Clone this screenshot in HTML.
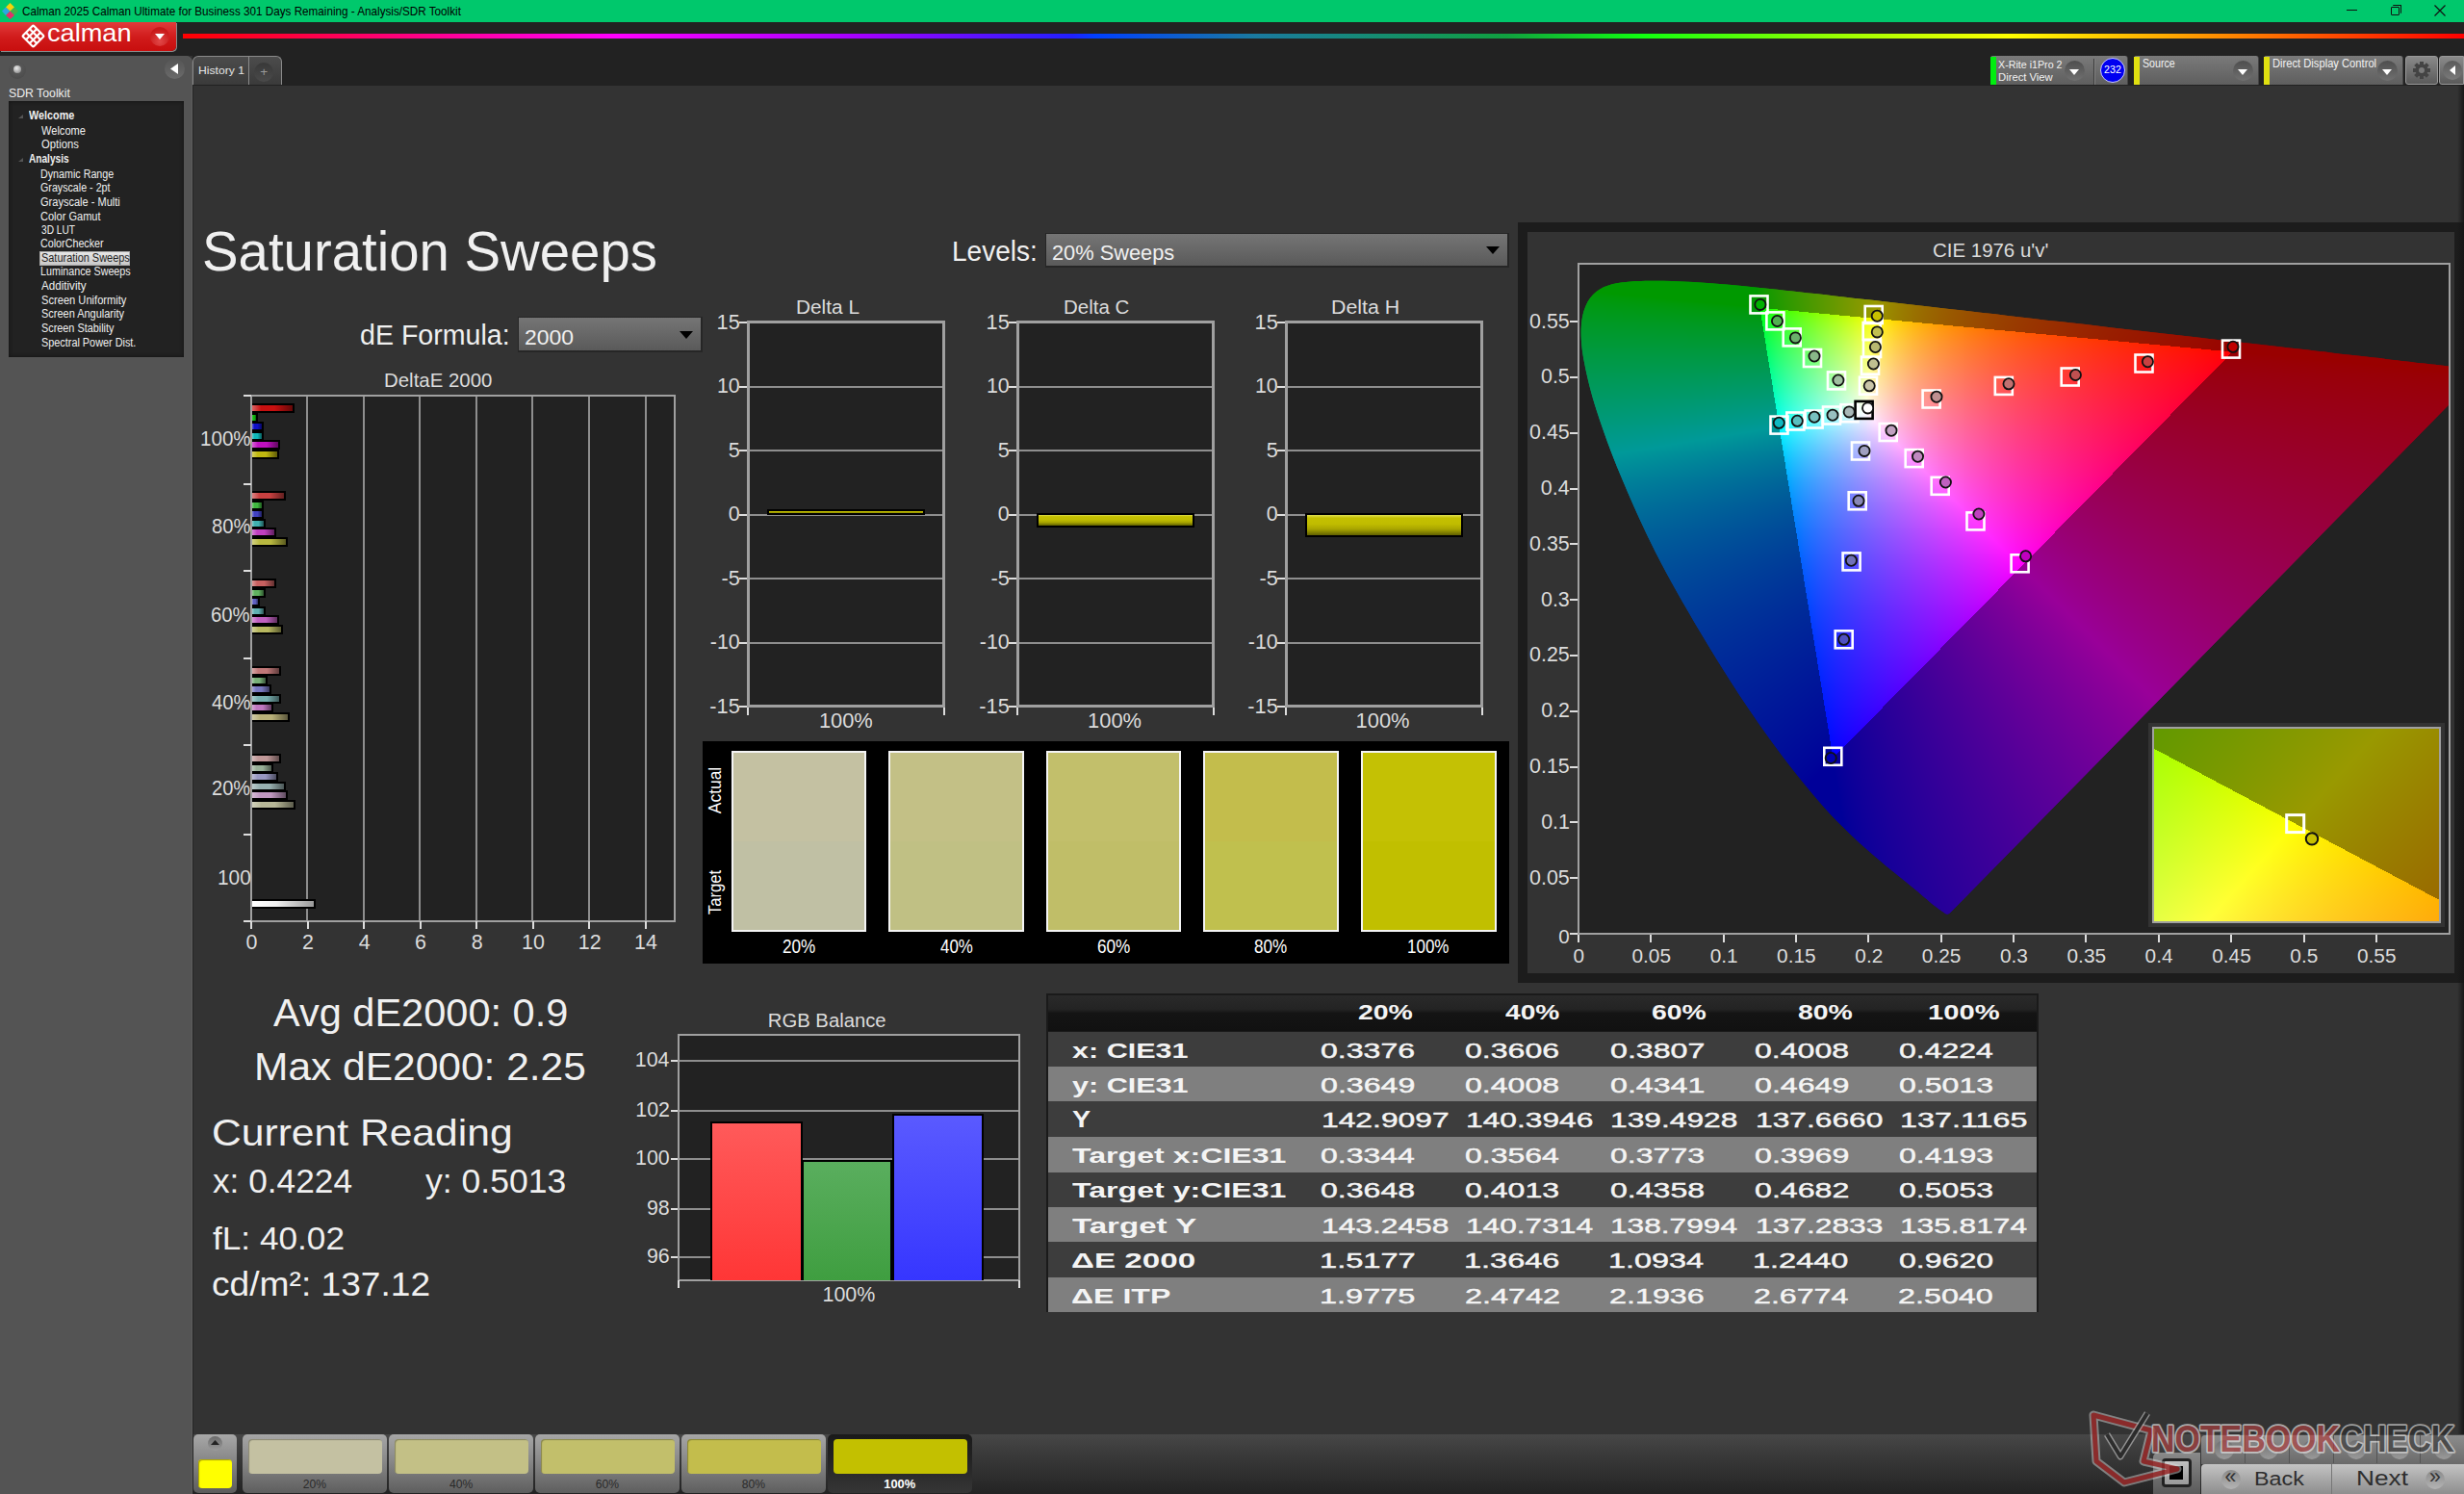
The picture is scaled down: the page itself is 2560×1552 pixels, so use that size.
<!DOCTYPE html><html><head><meta charset="utf-8"><style>html,body{margin:0;padding:0;width:2560px;height:1552px;overflow:hidden;background:#333;}body{position:relative;font-family:"Liberation Sans",sans-serif;}div,svg,canvas{box-sizing:border-box;}</style></head><body><div style="position:absolute;left:0px;top:0px;width:2560px;height:1552px;background:#333"></div>
<div style="position:absolute;left:0px;top:0px;width:2560px;height:23px;background:#00c86c"></div>
<div style="position:absolute;left:0px;top:23px;width:2560px;height:35px;background:#222"></div>
<div style="position:absolute;left:200px;top:58px;width:2360px;height:31px;background:#222"></div>
<div style="position:absolute;left:0;top:58px;width:200px;height:1494px;background:#545454;border-top-right-radius:7px;box-shadow:inset -1px 0 0 #5c5c5c"></div>
<div style="position:absolute;left:200px;top:66px;width:1px;height:1486px;background:#262626"></div>
<svg style="position:absolute;left:2px;top:3px" width="17" height="17" viewBox="0 0 17 17">
<polygon points="8.5,0 13,4.5 8.5,9 4,4.5" fill="#f5d20a"/>
<polygon points="13,4.5 17,8.5 13,13 8.5,8.5" fill="#3cb44a"/>
<polygon points="4,4.5 8.5,8.5 4,13 0,8.5" fill="#2aa8e0"/>
<polygon points="8.5,8.5 13,13 8.5,17 4,13" fill="#e0306a"/></svg>
<div style="position:absolute;left:23.42px;top:5.82px;font-size:12.33px;line-height:1;font-weight:normal;color:#000;white-space:nowrap;transform:scaleX(0.9482);transform-origin:0 0;">Calman 2025 Calman Ultimate for Business 301 Days Remaining  - Analysis/SDR Toolkit</div>
<div style="position:absolute;left:2438px;top:10px;width:11px;height:1px;background:#111"></div>
<div style="position:absolute;left:2484px;top:7px;width:9px;height:9px;border:1px solid #111;border-radius:1px"></div>
<div style="position:absolute;left:2486px;top:5px;width:9px;height:9px;border-top:1px solid #111;border-right:1px solid #111;border-radius:1px"></div>
<svg style="position:absolute;left:2529px;top:5px" width="12" height="12"><path d="M0.5 0.5L11.5 11.5M11.5 0.5L0.5 11.5" stroke="#111" stroke-width="1.2"/></svg>
<div style="position:absolute;left:0;top:23px;width:183px;height:30px;background:linear-gradient(#e23b3b,#d01a1a 55%,#c80e0e);border-bottom-right-radius:5px;box-shadow:1px 1px 0 #8a8a8a;"></div>
<svg style="position:absolute;left:22px;top:25px" width="25" height="25" viewBox="-12.5 -12.5 25 25">
<g fill="none" stroke="#fff" stroke-width="2.2" stroke-linejoin="round" transform="rotate(45)">
<rect x="-8" y="-8" width="16" height="16" rx="1.5"/>
<line x1="-2.7" y1="-8" x2="-2.7" y2="8"/><line x1="2.7" y1="-8" x2="2.7" y2="8"/>
<line x1="-8" y1="-2.7" x2="8" y2="-2.7"/><line x1="-8" y1="2.7" x2="8" y2="2.7"/></g></svg>
<div style="position:absolute;left:48.91px;top:22.46px;font-size:25.34px;line-height:1;font-weight:normal;color:#fff;white-space:nowrap;transform:scaleX(1.0724);transform-origin:0 0;">calman</div>
<div style="position:absolute;left:156px;top:28px;width:20px;height:20px;border-radius:50%;background:radial-gradient(circle at 50% 75%,#e24848,#c81818 70%)"></div>
<svg style="position:absolute;left:161px;top:35px" width="10" height="6"><polygon points="0,0 10,0 5,6" fill="#fff"/></svg>
<div style="position:absolute;left:190px;top:35px;width:2370px;height:5px;background:linear-gradient(90deg,#ff0000 0%,#ff0090 11%,#ff00ff 19%,#a000ff 30%,#2020ff 39%,#0040ff 40%,#1a7aa0 47%,#10a040 58%,#10ff10 64%,#a0ff00 73%,#ffff00 80%,#ff9000 89%,#ff0000 100%)"></div>
<div style="position:absolute;left:9px;top:64px;width:18px;height:18px;border-radius:50%;background:radial-gradient(circle at 50% 40%,#5e5e5e,#4c4c4c 75%,#5a5a5a)"></div>
<div style="position:absolute;left:14px;top:68px;width:8px;height:8px;border-radius:50%;background:radial-gradient(circle at 40% 35%,#eee,#999 70%)"></div>
<div style="position:absolute;left:171px;top:61px;width:21px;height:21px;border-radius:50%;background:linear-gradient(#555,#6a6a6a)"></div>
<svg style="position:absolute;left:177px;top:66px" width="8" height="11"><polygon points="8,0 8,11 0,5.5" fill="#fff"/></svg>
<div style="position:absolute;left:8.51px;top:90.44px;font-size:13.01px;line-height:1;font-weight:normal;color:#eee;white-space:nowrap;transform:scaleX(0.9442);transform-origin:0 0;">SDR Toolkit</div>
<div style="position:absolute;left:9px;top:105px;width:182px;height:266px;background:#222;box-shadow:inset 0 0 4px #111"></div>
<div style="position:absolute;left:41px;top:261px;width:94px;height:15px;background:linear-gradient(#e8e8e8,#c8c8c8);border:1px solid #aaa"></div>
<div style="position:absolute;left:30.00px;top:113.65px;font-size:12.88px;line-height:1;font-weight:bold;color:#f0f0f0;white-space:nowrap;transform:scaleX(0.8399);transform-origin:0 0;">Welcome</div>
<svg style="position:absolute;left:19px;top:119px" width="5" height="4"><polygon points="5,0 5,4 0,4" fill="#555"/></svg>
<div style="position:absolute;left:43.00px;top:129.65px;font-size:12.88px;line-height:1;font-weight:normal;color:#f0f0f0;white-space:nowrap;transform:scaleX(0.8591);transform-origin:0 0;">Welcome</div>
<div style="position:absolute;left:42.55px;top:143.65px;font-size:12.88px;line-height:1;font-weight:normal;color:#f0f0f0;white-space:nowrap;transform:scaleX(0.8741);transform-origin:0 0;">Options</div>
<div style="position:absolute;left:29.80px;top:158.65px;font-size:12.88px;line-height:1;font-weight:bold;color:#f0f0f0;white-space:nowrap;transform:scaleX(0.7848);transform-origin:0 0;">Analysis</div>
<svg style="position:absolute;left:19px;top:164px" width="5" height="4"><polygon points="5,0 5,4 0,4" fill="#555"/></svg>
<div style="position:absolute;left:42.14px;top:174.65px;font-size:12.88px;line-height:1;font-weight:normal;color:#f0f0f0;white-space:nowrap;transform:scaleX(0.8323);transform-origin:0 0;">Dynamic Range</div>
<div style="position:absolute;left:42.47px;top:188.65px;font-size:12.88px;line-height:1;font-weight:normal;color:#f0f0f0;white-space:nowrap;transform:scaleX(0.8305);transform-origin:0 0;">Grayscale - 2pt</div>
<div style="position:absolute;left:42.45px;top:203.65px;font-size:12.88px;line-height:1;font-weight:normal;color:#f0f0f0;white-space:nowrap;transform:scaleX(0.8565);transform-origin:0 0;">Grayscale - Multi</div>
<div style="position:absolute;left:42.45px;top:218.65px;font-size:12.88px;line-height:1;font-weight:normal;color:#f0f0f0;white-space:nowrap;transform:scaleX(0.8566);transform-origin:0 0;">Color Gamut</div>
<div style="position:absolute;left:42.70px;top:232.19px;font-size:13.43px;line-height:1;font-weight:normal;color:#f0f0f0;white-space:nowrap;transform:scaleX(0.7569);transform-origin:0 0;">3D LUT</div>
<div style="position:absolute;left:42.46px;top:247.45px;font-size:12.88px;line-height:1;font-weight:normal;color:#f0f0f0;white-space:nowrap;transform:scaleX(0.8343);transform-origin:0 0;">ColorChecker</div>
<div style="position:absolute;left:42.56px;top:262.45px;font-size:12.88px;line-height:1;font-weight:normal;color:#222;white-space:nowrap;transform:scaleX(0.8490);transform-origin:0 0;">Saturation Sweeps</div>
<div style="position:absolute;left:42.14px;top:276.35px;font-size:12.88px;line-height:1;font-weight:normal;color:#f0f0f0;white-space:nowrap;transform:scaleX(0.8336);transform-origin:0 0;">Luminance Sweeps</div>
<div style="position:absolute;left:43.00px;top:291.35px;font-size:12.88px;line-height:1;font-weight:normal;color:#f0f0f0;white-space:nowrap;transform:scaleX(0.9025);transform-origin:0 0;">Additivity</div>
<div style="position:absolute;left:42.55px;top:306.35px;font-size:12.88px;line-height:1;font-weight:normal;color:#f0f0f0;white-space:nowrap;transform:scaleX(0.8643);transform-origin:0 0;">Screen Uniformity</div>
<div style="position:absolute;left:42.56px;top:320.25px;font-size:12.88px;line-height:1;font-weight:normal;color:#f0f0f0;white-space:nowrap;transform:scaleX(0.8515);transform-origin:0 0;">Screen Angularity</div>
<div style="position:absolute;left:42.57px;top:335.25px;font-size:12.88px;line-height:1;font-weight:normal;color:#f0f0f0;white-space:nowrap;transform:scaleX(0.8432);transform-origin:0 0;">Screen Stability</div>
<div style="position:absolute;left:42.57px;top:350.25px;font-size:12.88px;line-height:1;font-weight:normal;color:#f0f0f0;white-space:nowrap;transform:scaleX(0.8435);transform-origin:0 0;">Spectral Power Dist.</div>
<div style="position:absolute;left:200px;top:58px;width:93px;height:30px;background:linear-gradient(#4c4c4c,#3a3a3a);border-top-left-radius:6px;border-top-right-radius:6px;border:1px solid #8a8a8a;border-bottom:none"></div>
<div style="position:absolute;left:258px;top:59px;width:1px;height:29px;background:#8a8a8a"></div>
<div style="position:absolute;left:205.53px;top:68.42px;font-size:11.51px;line-height:1;font-weight:normal;color:#e4e4e4;white-space:nowrap;transform:scaleX(1.0581);transform-origin:0 0;">History 1</div>
<div style="position:absolute;left:264px;top:65px;width:20px;height:20px;border-radius:50%;background:linear-gradient(#383838,#4a4a4a)"></div>
<div style="position:absolute;left:270.27px;top:67.97px;font-size:13.56px;line-height:1;font-weight:normal;color:#999;white-space:nowrap;">+</div>
<div style="position:absolute;left:2068px;top:58px;width:143px;height:30px;background:linear-gradient(#7a7a7a,#5e5e5e);border-top-left-radius:3px;border-top-right-radius:3px;border-left:1px solid #888;border-right:1px solid #444"></div>
<div style="position:absolute;left:2068px;top:59px;width:6px;height:29px;background:#00ee10"></div>
<div style="position:absolute;left:2145px;top:63px;width:21px;height:21px;border-radius:50%;background:linear-gradient(#4e4e4e,#707070)"></div>
<svg style="position:absolute;left:2150px;top:72px" width="10" height="6"><polygon points="0,0 10,0 5,6" fill="#fff"/></svg>
<div style="position:absolute;left:2076.39px;top:60.60px;font-size:11.64px;line-height:1;font-weight:normal;color:#f2f2f2;white-space:nowrap;transform:scaleX(0.9190);transform-origin:0 0;">X-Rite i1Pro 2</div>
<div style="position:absolute;left:2076.10px;top:74.64px;font-size:11.37px;line-height:1;font-weight:normal;color:#f2f2f2;white-space:nowrap;transform:scaleX(0.9917);transform-origin:0 0;">Direct View</div>
<div style="position:absolute;left:2175px;top:61px;width:1px;height:27px;background:#3e3e3e"></div>
<div style="position:absolute;left:2176px;top:61px;width:1px;height:27px;background:#808080"></div>
<div style="position:absolute;left:2182px;top:60px;width:26px;height:26px;border-radius:50%;background:#0000f0;border:1.5px solid #c8c8ff"></div>
<div style="position:absolute;left:2186.04px;top:67.39px;font-size:10.71px;line-height:1;font-weight:normal;color:#fff;white-space:nowrap;">232</div>
<div style="position:absolute;left:2217px;top:58px;width:130px;height:30px;background:linear-gradient(#7a7a7a,#5e5e5e);border-top-left-radius:3px;border-top-right-radius:3px;border-left:1px solid #888;border-right:1px solid #444"></div>
<div style="position:absolute;left:2217px;top:59px;width:6px;height:29px;background:#e0e010"></div>
<div style="position:absolute;left:2320px;top:63px;width:21px;height:21px;border-radius:50%;background:linear-gradient(#4e4e4e,#707070)"></div>
<svg style="position:absolute;left:2325px;top:72px" width="10" height="6"><polygon points="0,0 10,0 5,6" fill="#fff"/></svg>
<div style="position:absolute;left:2225.57px;top:59.73px;font-size:12.68px;line-height:1;font-weight:normal;color:#f2f2f2;white-space:nowrap;transform:scaleX(0.8419);transform-origin:0 0;">Source</div>
<div style="position:absolute;left:2352px;top:58px;width:145px;height:30px;background:linear-gradient(#7a7a7a,#5e5e5e);border-top-left-radius:3px;border-top-right-radius:3px;border-left:1px solid #888;border-right:1px solid #444"></div>
<div style="position:absolute;left:2352px;top:59px;width:6px;height:29px;background:#e0e010"></div>
<div style="position:absolute;left:2470px;top:63px;width:21px;height:21px;border-radius:50%;background:linear-gradient(#4e4e4e,#707070)"></div>
<svg style="position:absolute;left:2475px;top:72px" width="10" height="6"><polygon points="0,0 10,0 5,6" fill="#fff"/></svg>
<div style="position:absolute;left:2361.11px;top:60.02px;font-size:12.33px;line-height:1;font-weight:normal;color:#f2f2f2;white-space:nowrap;transform:scaleX(0.9067);transform-origin:0 0;">Direct Display Control</div>
<div style="position:absolute;left:2499px;top:58px;width:34px;height:30px;background:linear-gradient(#8a8a8a,#5a5a5a);border-radius:3px;border:1px solid #999"></div>
<svg style="position:absolute;left:2506px;top:63px" width="20" height="20" viewBox="-10 -10 20 20"><g fill="#444">
<circle r="6.5"/><rect x="-2" y="-9" width="4" height="5" transform="rotate(0)"/><rect x="-2" y="-9" width="4" height="5" transform="rotate(45)"/><rect x="-2" y="-9" width="4" height="5" transform="rotate(90)"/><rect x="-2" y="-9" width="4" height="5" transform="rotate(135)"/><rect x="-2" y="-9" width="4" height="5" transform="rotate(180)"/><rect x="-2" y="-9" width="4" height="5" transform="rotate(225)"/><rect x="-2" y="-9" width="4" height="5" transform="rotate(270)"/><rect x="-2" y="-9" width="4" height="5" transform="rotate(315)"/></g><circle r="3" fill="#7a7a7a"/></svg>
<div style="position:absolute;left:2534px;top:58px;width:26px;height:30px;background:linear-gradient(#8a8a8a,#5a5a5a);border-radius:3px 0 0 3px;border:1px solid #999"></div>
<div style="position:absolute;left:2538px;top:63px;width:20px;height:20px;border-radius:50%;background:linear-gradient(#5a5a5a,#7a7a7a)"></div>
<svg style="position:absolute;left:2545px;top:68px" width="6" height="10"><polygon points="6,0 6,10 0,5" fill="#fff"/></svg>
<div style="position:absolute;left:209.75px;top:234.18px;font-size:56.85px;line-height:1;font-weight:normal;color:#f0f0f0;white-space:nowrap;transform:scaleX(0.9911);transform-origin:0 0;">Saturation Sweeps</div>
<div style="position:absolute;left:373.86px;top:333.55px;font-size:28.77px;line-height:1;font-weight:normal;color:#f0f0f0;white-space:nowrap;transform:scaleX(0.9935);transform-origin:0 0;">dE Formula:</div>
<div style="position:absolute;left:538px;top:329px;width:192px;height:37px;background:#262626"></div>
<div style="position:absolute;left:539px;top:330px;width:189px;height:34px;background:linear-gradient(#757575,#5a5a5a)"></div>
<svg style="position:absolute;left:706px;top:343.5px" width="14" height="8"><polygon points="0,0 14,0 7,8" fill="#000"/></svg>
<div style="position:absolute;left:544.85px;top:339.07px;font-size:22.86px;line-height:1;font-weight:normal;color:#f0f0f0;white-space:nowrap;transform:scaleX(1.0025);transform-origin:0 0;">2000</div>
<div style="position:absolute;left:989.26px;top:246.45px;font-size:29.59px;line-height:1;font-weight:normal;color:#f0f0f0;white-space:nowrap;transform:scaleX(0.9484);transform-origin:0 0;">Levels:</div>
<div style="position:absolute;left:1086px;top:242px;width:482px;height:36px;background:#262626"></div>
<div style="position:absolute;left:1087px;top:243px;width:479px;height:33px;background:linear-gradient(#757575,#5a5a5a)"></div>
<svg style="position:absolute;left:1544px;top:256.0px" width="14" height="8"><polygon points="0,0 14,0 7,8" fill="#000"/></svg>
<div style="position:absolute;left:1093.41px;top:252.35px;font-size:22.54px;line-height:1;font-weight:normal;color:#f0f0f0;white-space:nowrap;transform:scaleX(0.9674);transform-origin:0 0;">20% Sweeps</div>
<div style="position:absolute;left:399.37px;top:386.18px;font-size:19.32px;line-height:1;font-weight:normal;color:#dcdcdc;white-space:nowrap;transform:scaleX(1.0570);transform-origin:0 0;">DeltaE 2000</div>
<div style="position:absolute;left:261px;top:411px;width:440px;height:546px;background:#222"></div>
<div style="position:absolute;left:318px;top:411px;width:2px;height:546px;background:#8e8e8e"></div>
<div style="position:absolute;left:377px;top:411px;width:2px;height:546px;background:#8e8e8e"></div>
<div style="position:absolute;left:435px;top:411px;width:2px;height:546px;background:#8e8e8e"></div>
<div style="position:absolute;left:494px;top:411px;width:2px;height:546px;background:#8e8e8e"></div>
<div style="position:absolute;left:552px;top:411px;width:2px;height:546px;background:#8e8e8e"></div>
<div style="position:absolute;left:611px;top:411px;width:2px;height:546px;background:#8e8e8e"></div>
<div style="position:absolute;left:670px;top:411px;width:2px;height:546px;background:#8e8e8e"></div>
<div style="position:absolute;left:261px;top:410px;width:441px;height:2px;background:#a0a0a0"></div>
<div style="position:absolute;left:700px;top:411px;width:2px;height:546px;background:#a0a0a0"></div>
<div style="position:absolute;left:260px;top:410px;width:2px;height:548px;background:#a0a0a0"></div>
<div style="position:absolute;left:260px;top:956px;width:442px;height:2px;background:#a0a0a0"></div>
<div style="position:absolute;left:253px;top:410px;width:8px;height:2px;background:#ddd"></div>
<div style="position:absolute;left:253px;top:502px;width:8px;height:2px;background:#ddd"></div>
<div style="position:absolute;left:253px;top:592px;width:8px;height:2px;background:#ddd"></div>
<div style="position:absolute;left:253px;top:683px;width:8px;height:2px;background:#ddd"></div>
<div style="position:absolute;left:253px;top:773px;width:8px;height:2px;background:#ddd"></div>
<div style="position:absolute;left:253px;top:866px;width:8px;height:2px;background:#ddd"></div>
<div style="position:absolute;left:253px;top:956px;width:8px;height:2px;background:#ddd"></div>
<div style="position:absolute;left:260px;top:957px;width:2px;height:8px;background:#ddd"></div>
<div style="position:absolute;left:255.61px;top:969.29px;font-size:21.43px;line-height:1;font-weight:normal;color:#dcdcdc;white-space:nowrap;">0</div>
<div style="position:absolute;left:319px;top:957px;width:2px;height:8px;background:#ddd"></div>
<div style="position:absolute;left:314.07px;top:969.29px;font-size:21.43px;line-height:1;font-weight:normal;color:#dcdcdc;white-space:nowrap;">2</div>
<div style="position:absolute;left:377px;top:957px;width:2px;height:8px;background:#ddd"></div>
<div style="position:absolute;left:372.75px;top:969.29px;font-size:21.43px;line-height:1;font-weight:normal;color:#dcdcdc;white-space:nowrap;">4</div>
<div style="position:absolute;left:436px;top:957px;width:2px;height:8px;background:#ddd"></div>
<div style="position:absolute;left:431.11px;top:969.29px;font-size:21.43px;line-height:1;font-weight:normal;color:#dcdcdc;white-space:nowrap;">6</div>
<div style="position:absolute;left:494px;top:957px;width:2px;height:8px;background:#ddd"></div>
<div style="position:absolute;left:489.79px;top:969.29px;font-size:21.43px;line-height:1;font-weight:normal;color:#dcdcdc;white-space:nowrap;">8</div>
<div style="position:absolute;left:553px;top:957px;width:2px;height:8px;background:#ddd"></div>
<div style="position:absolute;left:542.08px;top:969.29px;font-size:21.43px;line-height:1;font-weight:normal;color:#dcdcdc;white-space:nowrap;">10</div>
<div style="position:absolute;left:611px;top:957px;width:2px;height:8px;background:#ddd"></div>
<div style="position:absolute;left:600.76px;top:969.29px;font-size:21.43px;line-height:1;font-weight:normal;color:#dcdcdc;white-space:nowrap;">12</div>
<div style="position:absolute;left:670px;top:957px;width:2px;height:8px;background:#ddd"></div>
<div style="position:absolute;left:659.11px;top:969.29px;font-size:21.43px;line-height:1;font-weight:normal;color:#dcdcdc;white-space:nowrap;">14</div>
<div style="position:absolute;left:207.56px;top:446.29px;font-size:21.43px;line-height:1;font-weight:normal;color:#dcdcdc;white-space:nowrap;transform:scaleX(0.9605);transform-origin:0 0;">100%</div>
<div style="position:absolute;left:219.69px;top:537.29px;font-size:21.43px;line-height:1;font-weight:normal;color:#dcdcdc;white-space:nowrap;transform:scaleX(0.9443);transform-origin:0 0;">80%</div>
<div style="position:absolute;left:219.48px;top:629.29px;font-size:21.43px;line-height:1;font-weight:normal;color:#dcdcdc;white-space:nowrap;transform:scaleX(0.9492);transform-origin:0 0;">60%</div>
<div style="position:absolute;left:219.59px;top:720.29px;font-size:21.43px;line-height:1;font-weight:normal;color:#dcdcdc;white-space:nowrap;transform:scaleX(0.9466);transform-origin:0 0;">40%</div>
<div style="position:absolute;left:220.00px;top:809.29px;font-size:21.43px;line-height:1;font-weight:normal;color:#dcdcdc;white-space:nowrap;transform:scaleX(0.9371);transform-origin:0 0;">20%</div>
<div style="position:absolute;left:225.54px;top:902.29px;font-size:21.43px;line-height:1;font-weight:normal;color:#dcdcdc;white-space:nowrap;transform:scaleX(0.9738);transform-origin:0 0;">100</div>
<div style="position:absolute;left:262px;top:419px;width:44px;height:10px;background:#000"></div>
<div style="position:absolute;left:262px;top:421px;width:42px;height:6px;background:linear-gradient(90deg,#db6464,#c81010 22%,#c81010 55%,#640808)"></div>
<div style="position:absolute;left:262px;top:429px;width:6px;height:10px;background:#000"></div>
<div style="position:absolute;left:262px;top:431px;width:4px;height:6px;background:linear-gradient(90deg,#64d164,#10b810 22%,#10b810 55%,#085c08)"></div>
<div style="position:absolute;left:262px;top:438px;width:12px;height:10px;background:#000"></div>
<div style="position:absolute;left:262px;top:440px;width:10px;height:6px;background:linear-gradient(90deg,#6464db,#1010c8 22%,#1010c8 55%,#080864)"></div>
<div style="position:absolute;left:262px;top:448px;width:12px;height:10px;background:#000"></div>
<div style="position:absolute;left:262px;top:450px;width:10px;height:6px;background:linear-gradient(90deg,#64d1d1,#10b8b8 22%,#10b8b8 55%,#085c5c)"></div>
<div style="position:absolute;left:262px;top:457px;width:29px;height:10px;background:#000"></div>
<div style="position:absolute;left:262px;top:459px;width:27px;height:6px;background:linear-gradient(90deg,#d664d6,#c010c0 22%,#c010c0 55%,#600860)"></div>
<div style="position:absolute;left:262px;top:467px;width:28px;height:10px;background:#000"></div>
<div style="position:absolute;left:262px;top:469px;width:26px;height:6px;background:linear-gradient(90deg,#d6d164,#c0b810 22%,#c0b810 55%,#605c08)"></div>
<div style="position:absolute;left:262px;top:510px;width:35px;height:10px;background:#000"></div>
<div style="position:absolute;left:262px;top:512px;width:33px;height:6px;background:linear-gradient(90deg,#db8383,#c84040 22%,#c84040 55%,#642020)"></div>
<div style="position:absolute;left:262px;top:520px;width:12px;height:10px;background:#000"></div>
<div style="position:absolute;left:262px;top:522px;width:10px;height:6px;background:linear-gradient(90deg,#83d183,#40b840 22%,#40b840 55%,#205c20)"></div>
<div style="position:absolute;left:262px;top:529px;width:12px;height:10px;background:#000"></div>
<div style="position:absolute;left:262px;top:531px;width:10px;height:6px;background:linear-gradient(90deg,#8383d6,#4040c0 22%,#4040c0 55%,#202060)"></div>
<div style="position:absolute;left:262px;top:539px;width:14px;height:10px;background:#000"></div>
<div style="position:absolute;left:262px;top:541px;width:12px;height:6px;background:linear-gradient(90deg,#83cccc,#40b0b0 22%,#40b0b0 55%,#205858)"></div>
<div style="position:absolute;left:262px;top:548px;width:25px;height:10px;background:#000"></div>
<div style="position:absolute;left:262px;top:550px;width:23px;height:6px;background:linear-gradient(90deg,#d683d6,#c040c0 22%,#c040c0 55%,#602060)"></div>
<div style="position:absolute;left:262px;top:558px;width:37px;height:10px;background:#000"></div>
<div style="position:absolute;left:262px;top:560px;width:35px;height:6px;background:linear-gradient(90deg,#d1d183,#b8b840 22%,#b8b840 55%,#5c5c20)"></div>
<div style="position:absolute;left:262px;top:601px;width:25px;height:10px;background:#000"></div>
<div style="position:absolute;left:262px;top:603px;width:23px;height:6px;background:linear-gradient(90deg,#db9898,#c86060 22%,#c86060 55%,#643030)"></div>
<div style="position:absolute;left:262px;top:611px;width:14px;height:10px;background:#000"></div>
<div style="position:absolute;left:262px;top:613px;width:12px;height:6px;background:linear-gradient(90deg,#98cc98,#60b060 22%,#60b060 55%,#305830)"></div>
<div style="position:absolute;left:262px;top:620px;width:8px;height:10px;background:#000"></div>
<div style="position:absolute;left:262px;top:622px;width:6px;height:6px;background:linear-gradient(90deg,#9898d6,#6060c0 22%,#6060c0 55%,#303060)"></div>
<div style="position:absolute;left:262px;top:630px;width:14px;height:10px;background:#000"></div>
<div style="position:absolute;left:262px;top:632px;width:12px;height:6px;background:linear-gradient(90deg,#98cccc,#60b0b0 22%,#60b0b0 55%,#305858)"></div>
<div style="position:absolute;left:262px;top:639px;width:28px;height:10px;background:#000"></div>
<div style="position:absolute;left:262px;top:641px;width:26px;height:6px;background:linear-gradient(90deg,#d698d6,#c060c0 22%,#c060c0 55%,#603060)"></div>
<div style="position:absolute;left:262px;top:649px;width:32px;height:10px;background:#000"></div>
<div style="position:absolute;left:262px;top:651px;width:30px;height:6px;background:linear-gradient(90deg,#d1d198,#b8b860 22%,#b8b860 55%,#5c5c30)"></div>
<div style="position:absolute;left:262px;top:692px;width:30px;height:10px;background:#000"></div>
<div style="position:absolute;left:262px;top:694px;width:28px;height:6px;background:linear-gradient(90deg,#d6a7a7,#c07878 22%,#c07878 55%,#603c3c)"></div>
<div style="position:absolute;left:262px;top:702px;width:16px;height:10px;background:#000"></div>
<div style="position:absolute;left:262px;top:704px;width:14px;height:6px;background:linear-gradient(90deg,#a7cca7,#78b078 22%,#78b078 55%,#3c583c)"></div>
<div style="position:absolute;left:262px;top:711px;width:20px;height:10px;background:#000"></div>
<div style="position:absolute;left:262px;top:713px;width:18px;height:6px;background:linear-gradient(90deg,#a7a7d6,#7878c0 22%,#7878c0 55%,#3c3c60)"></div>
<div style="position:absolute;left:262px;top:721px;width:30px;height:10px;background:#000"></div>
<div style="position:absolute;left:262px;top:723px;width:28px;height:6px;background:linear-gradient(90deg,#a7cccc,#78b0b0 22%,#78b0b0 55%,#3c5858)"></div>
<div style="position:absolute;left:262px;top:730px;width:22px;height:10px;background:#000"></div>
<div style="position:absolute;left:262px;top:732px;width:20px;height:6px;background:linear-gradient(90deg,#d6a7d6,#c078c0 22%,#c078c0 55%,#603c60)"></div>
<div style="position:absolute;left:262px;top:740px;width:39px;height:10px;background:#000"></div>
<div style="position:absolute;left:262px;top:742px;width:37px;height:6px;background:linear-gradient(90deg,#d1cca7,#b8b078 22%,#b8b078 55%,#5c583c)"></div>
<div style="position:absolute;left:262px;top:783px;width:30px;height:10px;background:#000"></div>
<div style="position:absolute;left:262px;top:785px;width:28px;height:6px;background:linear-gradient(90deg,#d6bcbc,#c09898 22%,#c09898 55%,#604c4c)"></div>
<div style="position:absolute;left:262px;top:793px;width:22px;height:10px;background:#000"></div>
<div style="position:absolute;left:262px;top:795px;width:20px;height:6px;background:linear-gradient(90deg,#bcccbc,#98b098 22%,#98b098 55%,#4c584c)"></div>
<div style="position:absolute;left:262px;top:802px;width:27px;height:10px;background:#000"></div>
<div style="position:absolute;left:262px;top:804px;width:25px;height:6px;background:linear-gradient(90deg,#bcbcd6,#9898c0 22%,#9898c0 55%,#4c4c60)"></div>
<div style="position:absolute;left:262px;top:812px;width:35px;height:10px;background:#000"></div>
<div style="position:absolute;left:262px;top:814px;width:33px;height:6px;background:linear-gradient(90deg,#bccccc,#98b0b0 22%,#98b0b0 55%,#4c5858)"></div>
<div style="position:absolute;left:262px;top:821px;width:37px;height:10px;background:#000"></div>
<div style="position:absolute;left:262px;top:823px;width:35px;height:6px;background:linear-gradient(90deg,#d6bcd6,#c098c0 22%,#c098c0 55%,#604c60)"></div>
<div style="position:absolute;left:262px;top:831px;width:45px;height:10px;background:#000"></div>
<div style="position:absolute;left:262px;top:833px;width:43px;height:6px;background:linear-gradient(90deg,#d1d1bc,#b8b898 22%,#b8b898 55%,#5c5c4c)"></div>
<div style="position:absolute;left:262px;top:934px;width:66px;height:10px;background:#000"></div>
<div style="position:absolute;left:262px;top:936px;width:64px;height:6px;background:linear-gradient(90deg,#fff,#eee 40%,#999)"></div>
<div style="position:absolute;left:776px;top:333px;width:206px;height:401px;background:#222"></div>
<div style="position:absolute;left:776px;top:401px;width:206px;height:2px;background:#8e8e8e"></div>
<div style="position:absolute;left:768px;top:401px;width:8px;height:2px;background:#ddd"></div>
<div style="position:absolute;left:776px;top:467px;width:206px;height:2px;background:#8e8e8e"></div>
<div style="position:absolute;left:768px;top:467px;width:8px;height:2px;background:#ddd"></div>
<div style="position:absolute;left:776px;top:534px;width:206px;height:2px;background:#8e8e8e"></div>
<div style="position:absolute;left:768px;top:534px;width:8px;height:2px;background:#ddd"></div>
<div style="position:absolute;left:776px;top:600px;width:206px;height:2px;background:#8e8e8e"></div>
<div style="position:absolute;left:768px;top:600px;width:8px;height:2px;background:#ddd"></div>
<div style="position:absolute;left:776px;top:667px;width:206px;height:2px;background:#8e8e8e"></div>
<div style="position:absolute;left:768px;top:667px;width:8px;height:2px;background:#ddd"></div>
<div style="position:absolute;left:768px;top:334px;width:8px;height:2px;background:#ddd"></div>
<div style="position:absolute;left:768px;top:733px;width:8px;height:2px;background:#ddd"></div>
<div style="position:absolute;left:776px;top:333px;width:206px;height:3px;background:#a0a0a0"></div>
<div style="position:absolute;left:776px;top:732px;width:206px;height:3px;background:#a0a0a0"></div>
<div style="position:absolute;left:776px;top:333px;width:3px;height:402px;background:#a0a0a0"></div>
<div style="position:absolute;left:979px;top:333px;width:3px;height:402px;background:#a0a0a0"></div>
<div style="position:absolute;left:776px;top:735px;width:2px;height:8px;background:#ddd"></div>
<div style="position:absolute;left:980px;top:735px;width:2px;height:8px;background:#ddd"></div>
<div style="position:absolute;left:744.61px;top:324.12px;font-size:21.74px;line-height:1;font-weight:normal;color:#dcdcdc;white-space:nowrap;">15</div>
<div style="position:absolute;left:744.94px;top:390.89px;font-size:21.43px;line-height:1;font-weight:normal;color:#dcdcdc;white-space:nowrap;">10</div>
<div style="position:absolute;left:756.70px;top:457.12px;font-size:21.74px;line-height:1;font-weight:normal;color:#dcdcdc;white-space:nowrap;">5</div>
<div style="position:absolute;left:756.86px;top:523.89px;font-size:21.43px;line-height:1;font-weight:normal;color:#dcdcdc;white-space:nowrap;">0</div>
<div style="position:absolute;left:749.46px;top:590.12px;font-size:21.74px;line-height:1;font-weight:normal;color:#dcdcdc;white-space:nowrap;">-5</div>
<div style="position:absolute;left:737.80px;top:656.89px;font-size:21.43px;line-height:1;font-weight:normal;color:#dcdcdc;white-space:nowrap;">-10</div>
<div style="position:absolute;left:737.37px;top:723.12px;font-size:21.74px;line-height:1;font-weight:normal;color:#dcdcdc;white-space:nowrap;">-15</div>
<div style="position:absolute;left:826.93px;top:308.57px;font-size:20.27px;line-height:1;font-weight:normal;color:#dcdcdc;white-space:nowrap;transform:scaleX(1.0276);transform-origin:0 0;">Delta L</div>
<div style="position:absolute;left:850.90px;top:737.72px;font-size:21.86px;line-height:1;font-weight:normal;color:#dcdcdc;white-space:nowrap;">100%</div>
<div style="position:absolute;left:797px;top:529px;width:164px;height:6px;background:#000"></div>
<div style="position:absolute;left:799px;top:531px;width:160px;height:2px;background:linear-gradient(#dede50,#c4c000 15%,#c0bc00 45%,#a8a400 70%,#606000)"></div>
<div style="position:absolute;left:1056px;top:333px;width:206px;height:401px;background:#222"></div>
<div style="position:absolute;left:1056px;top:401px;width:206px;height:2px;background:#8e8e8e"></div>
<div style="position:absolute;left:1048px;top:401px;width:8px;height:2px;background:#ddd"></div>
<div style="position:absolute;left:1056px;top:467px;width:206px;height:2px;background:#8e8e8e"></div>
<div style="position:absolute;left:1048px;top:467px;width:8px;height:2px;background:#ddd"></div>
<div style="position:absolute;left:1056px;top:534px;width:206px;height:2px;background:#8e8e8e"></div>
<div style="position:absolute;left:1048px;top:534px;width:8px;height:2px;background:#ddd"></div>
<div style="position:absolute;left:1056px;top:600px;width:206px;height:2px;background:#8e8e8e"></div>
<div style="position:absolute;left:1048px;top:600px;width:8px;height:2px;background:#ddd"></div>
<div style="position:absolute;left:1056px;top:667px;width:206px;height:2px;background:#8e8e8e"></div>
<div style="position:absolute;left:1048px;top:667px;width:8px;height:2px;background:#ddd"></div>
<div style="position:absolute;left:1048px;top:334px;width:8px;height:2px;background:#ddd"></div>
<div style="position:absolute;left:1048px;top:733px;width:8px;height:2px;background:#ddd"></div>
<div style="position:absolute;left:1056px;top:333px;width:206px;height:3px;background:#a0a0a0"></div>
<div style="position:absolute;left:1056px;top:732px;width:206px;height:3px;background:#a0a0a0"></div>
<div style="position:absolute;left:1056px;top:333px;width:3px;height:402px;background:#a0a0a0"></div>
<div style="position:absolute;left:1259px;top:333px;width:3px;height:402px;background:#a0a0a0"></div>
<div style="position:absolute;left:1056px;top:735px;width:2px;height:8px;background:#ddd"></div>
<div style="position:absolute;left:1260px;top:735px;width:2px;height:8px;background:#ddd"></div>
<div style="position:absolute;left:1024.61px;top:324.12px;font-size:21.74px;line-height:1;font-weight:normal;color:#dcdcdc;white-space:nowrap;">15</div>
<div style="position:absolute;left:1024.94px;top:390.89px;font-size:21.43px;line-height:1;font-weight:normal;color:#dcdcdc;white-space:nowrap;">10</div>
<div style="position:absolute;left:1036.70px;top:457.12px;font-size:21.74px;line-height:1;font-weight:normal;color:#dcdcdc;white-space:nowrap;">5</div>
<div style="position:absolute;left:1036.86px;top:523.89px;font-size:21.43px;line-height:1;font-weight:normal;color:#dcdcdc;white-space:nowrap;">0</div>
<div style="position:absolute;left:1029.46px;top:590.12px;font-size:21.74px;line-height:1;font-weight:normal;color:#dcdcdc;white-space:nowrap;">-5</div>
<div style="position:absolute;left:1017.80px;top:656.89px;font-size:21.43px;line-height:1;font-weight:normal;color:#dcdcdc;white-space:nowrap;">-10</div>
<div style="position:absolute;left:1017.37px;top:723.12px;font-size:21.74px;line-height:1;font-weight:normal;color:#dcdcdc;white-space:nowrap;">-15</div>
<div style="position:absolute;left:1105.36px;top:308.57px;font-size:20.27px;line-height:1;font-weight:normal;color:#dcdcdc;white-space:nowrap;transform:scaleX(1.0103);transform-origin:0 0;">Delta C</div>
<div style="position:absolute;left:1130.10px;top:737.72px;font-size:21.86px;line-height:1;font-weight:normal;color:#dcdcdc;white-space:nowrap;">100%</div>
<div style="position:absolute;left:1077px;top:533px;width:164px;height:15px;background:#000"></div>
<div style="position:absolute;left:1079px;top:535px;width:160px;height:11px;background:linear-gradient(#dede50,#c4c000 15%,#c0bc00 45%,#a8a400 70%,#606000)"></div>
<div style="position:absolute;left:1335px;top:333px;width:206px;height:401px;background:#222"></div>
<div style="position:absolute;left:1335px;top:401px;width:206px;height:2px;background:#8e8e8e"></div>
<div style="position:absolute;left:1327px;top:401px;width:8px;height:2px;background:#ddd"></div>
<div style="position:absolute;left:1335px;top:467px;width:206px;height:2px;background:#8e8e8e"></div>
<div style="position:absolute;left:1327px;top:467px;width:8px;height:2px;background:#ddd"></div>
<div style="position:absolute;left:1335px;top:534px;width:206px;height:2px;background:#8e8e8e"></div>
<div style="position:absolute;left:1327px;top:534px;width:8px;height:2px;background:#ddd"></div>
<div style="position:absolute;left:1335px;top:600px;width:206px;height:2px;background:#8e8e8e"></div>
<div style="position:absolute;left:1327px;top:600px;width:8px;height:2px;background:#ddd"></div>
<div style="position:absolute;left:1335px;top:667px;width:206px;height:2px;background:#8e8e8e"></div>
<div style="position:absolute;left:1327px;top:667px;width:8px;height:2px;background:#ddd"></div>
<div style="position:absolute;left:1327px;top:334px;width:8px;height:2px;background:#ddd"></div>
<div style="position:absolute;left:1327px;top:733px;width:8px;height:2px;background:#ddd"></div>
<div style="position:absolute;left:1335px;top:333px;width:206px;height:3px;background:#a0a0a0"></div>
<div style="position:absolute;left:1335px;top:732px;width:206px;height:3px;background:#a0a0a0"></div>
<div style="position:absolute;left:1335px;top:333px;width:3px;height:402px;background:#a0a0a0"></div>
<div style="position:absolute;left:1538px;top:333px;width:3px;height:402px;background:#a0a0a0"></div>
<div style="position:absolute;left:1335px;top:735px;width:2px;height:8px;background:#ddd"></div>
<div style="position:absolute;left:1539px;top:735px;width:2px;height:8px;background:#ddd"></div>
<div style="position:absolute;left:1303.61px;top:324.12px;font-size:21.74px;line-height:1;font-weight:normal;color:#dcdcdc;white-space:nowrap;">15</div>
<div style="position:absolute;left:1303.94px;top:390.89px;font-size:21.43px;line-height:1;font-weight:normal;color:#dcdcdc;white-space:nowrap;">10</div>
<div style="position:absolute;left:1315.70px;top:457.12px;font-size:21.74px;line-height:1;font-weight:normal;color:#dcdcdc;white-space:nowrap;">5</div>
<div style="position:absolute;left:1315.86px;top:523.89px;font-size:21.43px;line-height:1;font-weight:normal;color:#dcdcdc;white-space:nowrap;">0</div>
<div style="position:absolute;left:1308.46px;top:590.12px;font-size:21.74px;line-height:1;font-weight:normal;color:#dcdcdc;white-space:nowrap;">-5</div>
<div style="position:absolute;left:1296.80px;top:656.89px;font-size:21.43px;line-height:1;font-weight:normal;color:#dcdcdc;white-space:nowrap;">-10</div>
<div style="position:absolute;left:1296.37px;top:723.12px;font-size:21.74px;line-height:1;font-weight:normal;color:#dcdcdc;white-space:nowrap;">-15</div>
<div style="position:absolute;left:1382.79px;top:308.57px;font-size:20.27px;line-height:1;font-weight:normal;color:#dcdcdc;white-space:nowrap;transform:scaleX(1.0540);transform-origin:0 0;">Delta H</div>
<div style="position:absolute;left:1408.60px;top:737.72px;font-size:21.86px;line-height:1;font-weight:normal;color:#dcdcdc;white-space:nowrap;">100%</div>
<div style="position:absolute;left:1356px;top:533px;width:164px;height:25px;background:#000"></div>
<div style="position:absolute;left:1358px;top:535px;width:160px;height:21px;background:linear-gradient(#dede50,#c4c000 15%,#c0bc00 45%,#a8a400 70%,#606000)"></div>
<div style="position:absolute;left:730px;top:770px;width:838px;height:231px;background:#000"></div>
<div style="position:absolute;left:760px;top:780px;width:140px;height:188px;border:2px solid #f4f4f4;background:linear-gradient(#c4c1a2 50%,#c0c0a4 50%)"></div>
<div style="position:absolute;left:813.14px;top:973.61px;font-size:19.29px;line-height:1;font-weight:normal;color:#fff;white-space:nowrap;transform:scaleX(0.8901);transform-origin:0 0;">20%</div>
<div style="position:absolute;left:923px;top:780px;width:141px;height:188px;border:2px solid #f4f4f4;background:linear-gradient(#c3c086 50%,#c0c084 50%)"></div>
<div style="position:absolute;left:976.66px;top:973.61px;font-size:19.29px;line-height:1;font-weight:normal;color:#fff;white-space:nowrap;transform:scaleX(0.8765);transform-origin:0 0;">40%</div>
<div style="position:absolute;left:1087px;top:780px;width:140px;height:188px;border:2px solid #f4f4f4;background:linear-gradient(#c2bf6b 50%,#c0be68 50%)"></div>
<div style="position:absolute;left:1140.14px;top:973.61px;font-size:19.29px;line-height:1;font-weight:normal;color:#fff;white-space:nowrap;transform:scaleX(0.8901);transform-origin:0 0;">60%</div>
<div style="position:absolute;left:1250px;top:780px;width:141px;height:188px;border:2px solid #f4f4f4;background:linear-gradient(#c3bd4c 50%,#c0c04e 50%)"></div>
<div style="position:absolute;left:1303.32px;top:973.61px;font-size:19.29px;line-height:1;font-weight:normal;color:#fff;white-space:nowrap;transform:scaleX(0.8855);transform-origin:0 0;">80%</div>
<div style="position:absolute;left:1414px;top:780px;width:141px;height:188px;border:2px solid #f4f4f4;background:linear-gradient(#c4c104 50%,#c1bf00 50%)"></div>
<div style="position:absolute;left:1462.41px;top:973.61px;font-size:19.29px;line-height:1;font-weight:normal;color:#fff;white-space:nowrap;transform:scaleX(0.8816);transform-origin:0 0;">100%</div>
<div style="position:absolute;left:743px;top:821px;transform:translate(-50%,-50%) rotate(-90deg) scaleX(0.94);font-size:18.5px;color:#fff;white-space:nowrap;line-height:1">Actual</div>
<div style="position:absolute;left:743px;top:926.5px;transform:translate(-50%,-50%) rotate(-90deg) scaleX(0.9);font-size:18.5px;color:#fff;white-space:nowrap;line-height:1">Target</div>
<div style="position:absolute;left:284.00px;top:1032.15px;font-size:40.41px;line-height:1;font-weight:normal;color:#f0f0f0;white-space:nowrap;transform:scaleX(1.0276);transform-origin:0 0;">Avg dE2000: 0.9</div>
<div style="position:absolute;left:263.60px;top:1089.17px;font-size:40.27px;line-height:1;font-weight:normal;color:#f0f0f0;white-space:nowrap;transform:scaleX(1.0552);transform-origin:0 0;">Max dE2000: 2.25</div>
<div style="position:absolute;left:219.67px;top:1157.27px;font-size:39.45px;line-height:1;font-weight:normal;color:#f0f0f0;white-space:nowrap;transform:scaleX(1.0803);transform-origin:0 0;">Current Reading</div>
<div style="position:absolute;left:220.65px;top:1210.37px;font-size:34.86px;line-height:1;font-weight:normal;color:#f0f0f0;white-space:nowrap;transform:scaleX(1.0109);transform-origin:0 0;">x: 0.4224</div>
<div style="position:absolute;left:441.50px;top:1210.37px;font-size:34.86px;line-height:1;font-weight:normal;color:#f0f0f0;white-space:nowrap;transform:scaleX(1.0193);transform-origin:0 0;">y: 0.5013</div>
<div style="position:absolute;left:220.65px;top:1269.72px;font-size:33.97px;line-height:1;font-weight:normal;color:#f0f0f0;white-space:nowrap;transform:scaleX(1.0359);transform-origin:0 0;">fL: 40.02</div>
<div style="position:absolute;left:219.51px;top:1316.73px;font-size:35.62px;line-height:1;font-weight:normal;color:#f0f0f0;white-space:nowrap;transform:scaleX(1.0433);transform-origin:0 0;">cd/m²: 137.12</div>
<div style="position:absolute;left:797.84px;top:1050.37px;font-size:20.27px;line-height:1;font-weight:normal;color:#dcdcdc;white-space:nowrap;">RGB Balance</div>
<div style="position:absolute;left:705px;top:1075px;width:354px;height:255px;background:#222"></div>
<div style="position:absolute;left:705px;top:1101px;width:354px;height:2px;background:#8e8e8e"></div>
<div style="position:absolute;left:697px;top:1101px;width:8px;height:2px;background:#ddd"></div>
<div style="position:absolute;left:659.81px;top:1091.29px;font-size:21.43px;line-height:1;font-weight:normal;color:#dcdcdc;white-space:nowrap;">104</div>
<div style="position:absolute;left:705px;top:1153px;width:354px;height:2px;background:#8e8e8e"></div>
<div style="position:absolute;left:697px;top:1153px;width:8px;height:2px;background:#ddd"></div>
<div style="position:absolute;left:660.24px;top:1143.29px;font-size:21.43px;line-height:1;font-weight:normal;color:#dcdcdc;white-space:nowrap;">102</div>
<div style="position:absolute;left:705px;top:1203px;width:354px;height:2px;background:#8e8e8e"></div>
<div style="position:absolute;left:697px;top:1203px;width:8px;height:2px;background:#ddd"></div>
<div style="position:absolute;left:660.02px;top:1193.29px;font-size:21.43px;line-height:1;font-weight:normal;color:#dcdcdc;white-space:nowrap;">100</div>
<div style="position:absolute;left:705px;top:1255px;width:354px;height:2px;background:#8e8e8e"></div>
<div style="position:absolute;left:697px;top:1255px;width:8px;height:2px;background:#ddd"></div>
<div style="position:absolute;left:671.94px;top:1245.29px;font-size:21.43px;line-height:1;font-weight:normal;color:#dcdcdc;white-space:nowrap;">98</div>
<div style="position:absolute;left:705px;top:1305px;width:354px;height:2px;background:#8e8e8e"></div>
<div style="position:absolute;left:697px;top:1305px;width:8px;height:2px;background:#ddd"></div>
<div style="position:absolute;left:671.94px;top:1295.29px;font-size:21.43px;line-height:1;font-weight:normal;color:#dcdcdc;white-space:nowrap;">96</div>
<div style="position:absolute;left:705px;top:1074px;width:354px;height:2px;background:#a0a0a0"></div>
<div style="position:absolute;left:705px;top:1329px;width:354px;height:2px;background:#a0a0a0"></div>
<div style="position:absolute;left:704px;top:1074px;width:2px;height:257px;background:#a0a0a0"></div>
<div style="position:absolute;left:1058px;top:1074px;width:2px;height:257px;background:#a0a0a0"></div>
<div style="position:absolute;left:704px;top:1330px;width:2px;height:8px;background:#ddd"></div>
<div style="position:absolute;left:1058px;top:1330px;width:2px;height:8px;background:#ddd"></div>
<div style="position:absolute;left:738px;top:1165px;width:96px;height:165px;background:#000"></div>
<div style="position:absolute;left:740px;top:1167px;width:92px;height:163px;background:linear-gradient(#ff5a5a,#ff3636)"></div>
<div style="position:absolute;left:833px;top:1205px;width:94px;height:125px;background:#000"></div>
<div style="position:absolute;left:835px;top:1207px;width:90px;height:123px;background:linear-gradient(#5aae5e,#3f9e40)"></div>
<div style="position:absolute;left:927px;top:1157px;width:95px;height:173px;background:#000"></div>
<div style="position:absolute;left:929px;top:1159px;width:91px;height:171px;background:linear-gradient(#5a5aff,#3636ff)"></div>
<div style="position:absolute;left:854.56px;top:1334.79px;font-size:21.43px;line-height:1;font-weight:normal;color:#dcdcdc;white-space:nowrap;">100%</div>
<div style="position:absolute;left:1087px;top:1032px;width:1031px;height:331px;background:#1a1a1a"></div>
<div style="position:absolute;left:1089px;top:1034px;width:1027px;height:37px;background:linear-gradient(#2a2a2a,#232323 40%,#141414 50%,#111)"></div>
<div style="position:absolute;left:1089px;top:1072px;width:1027px;height:36px;background:#3d3d3d"></div>
<div style="position:absolute;left:1114.30px;top:1079.69px;font-size:22.71px;line-height:1;font-weight:bold;color:#f4f4f4;white-space:nowrap;transform:scaleX(1.3454);transform-origin:0 0;">x: CIE31</div>
<div style="position:absolute;left:1372.04px;top:1079.69px;font-size:22.71px;line-height:1;font-weight:normal;color:#f4f4f4;white-space:nowrap;transform:scaleX(1.4124);transform-origin:0 0;-webkit-text-stroke:0.45px #f4f4f4;">0.3376</div>
<div style="position:absolute;left:1522.29px;top:1079.69px;font-size:22.71px;line-height:1;font-weight:normal;color:#f4f4f4;white-space:nowrap;transform:scaleX(1.4124);transform-origin:0 0;-webkit-text-stroke:0.45px #f4f4f4;">0.3606</div>
<div style="position:absolute;left:1672.53px;top:1079.69px;font-size:22.71px;line-height:1;font-weight:normal;color:#f4f4f4;white-space:nowrap;transform:scaleX(1.4171);transform-origin:0 0;-webkit-text-stroke:0.45px #f4f4f4;">0.3807</div>
<div style="position:absolute;left:1822.79px;top:1079.69px;font-size:22.71px;line-height:1;font-weight:normal;color:#f4f4f4;white-space:nowrap;transform:scaleX(1.4124);transform-origin:0 0;-webkit-text-stroke:0.45px #f4f4f4;">0.4008</div>
<div style="position:absolute;left:1973.04px;top:1079.69px;font-size:22.71px;line-height:1;font-weight:normal;color:#f4f4f4;white-space:nowrap;transform:scaleX(1.4077);transform-origin:0 0;-webkit-text-stroke:0.45px #f4f4f4;">0.4224</div>
<div style="position:absolute;left:1089px;top:1108px;width:1027px;height:36px;background:#7f7f7f"></div>
<div style="position:absolute;left:1114.30px;top:1115.94px;font-size:22.71px;line-height:1;font-weight:bold;color:#f4f4f4;white-space:nowrap;transform:scaleX(1.3454);transform-origin:0 0;">y: CIE31</div>
<div style="position:absolute;left:1372.03px;top:1115.94px;font-size:22.71px;line-height:1;font-weight:normal;color:#f4f4f4;white-space:nowrap;transform:scaleX(1.4171);transform-origin:0 0;-webkit-text-stroke:0.45px #f4f4f4;">0.3649</div>
<div style="position:absolute;left:1522.29px;top:1115.94px;font-size:22.71px;line-height:1;font-weight:normal;color:#f4f4f4;white-space:nowrap;transform:scaleX(1.4124);transform-origin:0 0;-webkit-text-stroke:0.45px #f4f4f4;">0.4008</div>
<div style="position:absolute;left:1672.53px;top:1115.94px;font-size:22.71px;line-height:1;font-weight:normal;color:#f4f4f4;white-space:nowrap;transform:scaleX(1.4171);transform-origin:0 0;-webkit-text-stroke:0.45px #f4f4f4;">0.4341</div>
<div style="position:absolute;left:1822.78px;top:1115.94px;font-size:22.71px;line-height:1;font-weight:normal;color:#f4f4f4;white-space:nowrap;transform:scaleX(1.4171);transform-origin:0 0;-webkit-text-stroke:0.45px #f4f4f4;">0.4649</div>
<div style="position:absolute;left:1973.04px;top:1115.94px;font-size:22.71px;line-height:1;font-weight:normal;color:#f4f4f4;white-space:nowrap;transform:scaleX(1.4124);transform-origin:0 0;-webkit-text-stroke:0.45px #f4f4f4;">0.5013</div>
<div style="position:absolute;left:1089px;top:1144px;width:1027px;height:37px;background:#3d3d3d"></div>
<div style="position:absolute;left:1114.01px;top:1152.16px;font-size:23.04px;line-height:1;font-weight:bold;color:#f4f4f4;white-space:nowrap;transform:scaleX(1.2485);transform-origin:0 0;">Y</div>
<div style="position:absolute;left:1372.77px;top:1152.44px;font-size:22.71px;line-height:1;font-weight:normal;color:#f4f4f4;white-space:nowrap;transform:scaleX(1.4006);transform-origin:0 0;-webkit-text-stroke:0.45px #f4f4f4;">142.9097</div>
<div style="position:absolute;left:1523.03px;top:1152.44px;font-size:22.71px;line-height:1;font-weight:normal;color:#f4f4f4;white-space:nowrap;transform:scaleX(1.3972);transform-origin:0 0;-webkit-text-stroke:0.45px #f4f4f4;">140.3946</div>
<div style="position:absolute;left:1673.28px;top:1152.44px;font-size:22.71px;line-height:1;font-weight:normal;color:#f4f4f4;white-space:nowrap;transform:scaleX(1.3972);transform-origin:0 0;-webkit-text-stroke:0.45px #f4f4f4;">139.4928</div>
<div style="position:absolute;left:1823.53px;top:1152.44px;font-size:22.71px;line-height:1;font-weight:normal;color:#f4f4f4;white-space:nowrap;transform:scaleX(1.3972);transform-origin:0 0;-webkit-text-stroke:0.45px #f4f4f4;">137.6660</div>
<div style="position:absolute;left:1973.74px;top:1152.44px;font-size:22.71px;line-height:1;font-weight:normal;color:#f4f4f4;white-space:nowrap;transform:scaleX(1.4232);transform-origin:0 0;-webkit-text-stroke:0.45px #f4f4f4;">137.1165</div>
<div style="position:absolute;left:1089px;top:1181px;width:1027px;height:37px;background:#7f7f7f"></div>
<div style="position:absolute;left:1113.98px;top:1188.94px;font-size:22.71px;line-height:1;font-weight:bold;color:#f4f4f4;white-space:nowrap;transform:scaleX(1.4143);transform-origin:0 0;">Target x:CIE31</div>
<div style="position:absolute;left:1372.04px;top:1188.94px;font-size:22.71px;line-height:1;font-weight:normal;color:#f4f4f4;white-space:nowrap;transform:scaleX(1.4077);transform-origin:0 0;-webkit-text-stroke:0.45px #f4f4f4;">0.3344</div>
<div style="position:absolute;left:1522.29px;top:1188.94px;font-size:22.71px;line-height:1;font-weight:normal;color:#f4f4f4;white-space:nowrap;transform:scaleX(1.4077);transform-origin:0 0;-webkit-text-stroke:0.45px #f4f4f4;">0.3564</div>
<div style="position:absolute;left:1672.54px;top:1188.94px;font-size:22.71px;line-height:1;font-weight:normal;color:#f4f4f4;white-space:nowrap;transform:scaleX(1.4124);transform-origin:0 0;-webkit-text-stroke:0.45px #f4f4f4;">0.3773</div>
<div style="position:absolute;left:1822.78px;top:1188.94px;font-size:22.71px;line-height:1;font-weight:normal;color:#f4f4f4;white-space:nowrap;transform:scaleX(1.4171);transform-origin:0 0;-webkit-text-stroke:0.45px #f4f4f4;">0.3969</div>
<div style="position:absolute;left:1973.04px;top:1188.94px;font-size:22.71px;line-height:1;font-weight:normal;color:#f4f4f4;white-space:nowrap;transform:scaleX(1.4124);transform-origin:0 0;-webkit-text-stroke:0.45px #f4f4f4;">0.4193</div>
<div style="position:absolute;left:1089px;top:1218px;width:1027px;height:36px;background:#3d3d3d"></div>
<div style="position:absolute;left:1113.98px;top:1225.44px;font-size:22.71px;line-height:1;font-weight:bold;color:#f4f4f4;white-space:nowrap;transform:scaleX(1.4143);transform-origin:0 0;">Target y:CIE31</div>
<div style="position:absolute;left:1372.04px;top:1225.44px;font-size:22.71px;line-height:1;font-weight:normal;color:#f4f4f4;white-space:nowrap;transform:scaleX(1.4124);transform-origin:0 0;-webkit-text-stroke:0.45px #f4f4f4;">0.3648</div>
<div style="position:absolute;left:1522.29px;top:1225.44px;font-size:22.71px;line-height:1;font-weight:normal;color:#f4f4f4;white-space:nowrap;transform:scaleX(1.4124);transform-origin:0 0;-webkit-text-stroke:0.45px #f4f4f4;">0.4013</div>
<div style="position:absolute;left:1672.54px;top:1225.44px;font-size:22.71px;line-height:1;font-weight:normal;color:#f4f4f4;white-space:nowrap;transform:scaleX(1.4124);transform-origin:0 0;-webkit-text-stroke:0.45px #f4f4f4;">0.4358</div>
<div style="position:absolute;left:1822.78px;top:1225.44px;font-size:22.71px;line-height:1;font-weight:normal;color:#f4f4f4;white-space:nowrap;transform:scaleX(1.4171);transform-origin:0 0;-webkit-text-stroke:0.45px #f4f4f4;">0.4682</div>
<div style="position:absolute;left:1973.04px;top:1225.44px;font-size:22.71px;line-height:1;font-weight:normal;color:#f4f4f4;white-space:nowrap;transform:scaleX(1.4124);transform-origin:0 0;-webkit-text-stroke:0.45px #f4f4f4;">0.5053</div>
<div style="position:absolute;left:1089px;top:1254px;width:1027px;height:36px;background:#7f7f7f"></div>
<div style="position:absolute;left:1113.97px;top:1261.94px;font-size:22.71px;line-height:1;font-weight:bold;color:#f4f4f4;white-space:nowrap;transform:scaleX(1.4559);transform-origin:0 0;">Target Y</div>
<div style="position:absolute;left:1372.78px;top:1261.94px;font-size:22.71px;line-height:1;font-weight:normal;color:#f4f4f4;white-space:nowrap;transform:scaleX(1.3972);transform-origin:0 0;-webkit-text-stroke:0.45px #f4f4f4;">143.2458</div>
<div style="position:absolute;left:1523.03px;top:1261.94px;font-size:22.71px;line-height:1;font-weight:normal;color:#f4f4f4;white-space:nowrap;transform:scaleX(1.3938);transform-origin:0 0;-webkit-text-stroke:0.45px #f4f4f4;">140.7314</div>
<div style="position:absolute;left:1673.28px;top:1261.94px;font-size:22.71px;line-height:1;font-weight:normal;color:#f4f4f4;white-space:nowrap;transform:scaleX(1.3938);transform-origin:0 0;-webkit-text-stroke:0.45px #f4f4f4;">138.7994</div>
<div style="position:absolute;left:1823.53px;top:1261.94px;font-size:22.71px;line-height:1;font-weight:normal;color:#f4f4f4;white-space:nowrap;transform:scaleX(1.3972);transform-origin:0 0;-webkit-text-stroke:0.45px #f4f4f4;">137.2833</div>
<div style="position:absolute;left:1973.78px;top:1261.94px;font-size:22.71px;line-height:1;font-weight:normal;color:#f4f4f4;white-space:nowrap;transform:scaleX(1.3938);transform-origin:0 0;-webkit-text-stroke:0.45px #f4f4f4;">135.8174</div>
<div style="position:absolute;left:1089px;top:1290px;width:1027px;height:37px;background:#3d3d3d"></div>
<div style="position:absolute;left:1112.97px;top:1298.44px;font-size:22.71px;line-height:1;font-weight:bold;color:#f4f4f4;white-space:nowrap;transform:scaleX(1.4633);transform-origin:0 0;">ΔE 2000</div>
<div style="position:absolute;left:1370.72px;top:1298.44px;font-size:22.71px;line-height:1;font-weight:normal;color:#f4f4f4;white-space:nowrap;transform:scaleX(1.4364);transform-origin:0 0;-webkit-text-stroke:0.45px #f4f4f4;">1.5177</div>
<div style="position:absolute;left:1520.97px;top:1298.44px;font-size:22.71px;line-height:1;font-weight:normal;color:#f4f4f4;white-space:nowrap;transform:scaleX(1.4315);transform-origin:0 0;-webkit-text-stroke:0.45px #f4f4f4;">1.3646</div>
<div style="position:absolute;left:1671.23px;top:1298.44px;font-size:22.71px;line-height:1;font-weight:normal;color:#f4f4f4;white-space:nowrap;transform:scaleX(1.4267);transform-origin:0 0;-webkit-text-stroke:0.45px #f4f4f4;">1.0934</div>
<div style="position:absolute;left:1821.47px;top:1298.44px;font-size:22.71px;line-height:1;font-weight:normal;color:#f4f4f4;white-space:nowrap;transform:scaleX(1.4315);transform-origin:0 0;-webkit-text-stroke:0.45px #f4f4f4;">1.2440</div>
<div style="position:absolute;left:1973.04px;top:1298.44px;font-size:22.71px;line-height:1;font-weight:normal;color:#f4f4f4;white-space:nowrap;transform:scaleX(1.4124);transform-origin:0 0;-webkit-text-stroke:0.45px #f4f4f4;">0.9620</div>
<div style="position:absolute;left:1089px;top:1327px;width:1027px;height:36px;background:#7f7f7f"></div>
<div style="position:absolute;left:1113.02px;top:1334.69px;font-size:22.71px;line-height:1;font-weight:bold;color:#f4f4f4;white-space:nowrap;transform:scaleX(1.4134);transform-origin:0 0;">ΔE ITP</div>
<div style="position:absolute;left:1370.72px;top:1334.69px;font-size:22.71px;line-height:1;font-weight:normal;color:#f4f4f4;white-space:nowrap;transform:scaleX(1.4315);transform-origin:0 0;-webkit-text-stroke:0.45px #f4f4f4;">1.9775</div>
<div style="position:absolute;left:1521.63px;top:1334.69px;font-size:22.71px;line-height:1;font-weight:normal;color:#f4f4f4;white-space:nowrap;transform:scaleX(1.4267);transform-origin:0 0;-webkit-text-stroke:0.45px #f4f4f4;">2.4742</div>
<div style="position:absolute;left:1671.89px;top:1334.69px;font-size:22.71px;line-height:1;font-weight:normal;color:#f4f4f4;white-space:nowrap;transform:scaleX(1.4219);transform-origin:0 0;-webkit-text-stroke:0.45px #f4f4f4;">2.1936</div>
<div style="position:absolute;left:1822.14px;top:1334.69px;font-size:22.71px;line-height:1;font-weight:normal;color:#f4f4f4;white-space:nowrap;transform:scaleX(1.4171);transform-origin:0 0;-webkit-text-stroke:0.45px #f4f4f4;">2.6774</div>
<div style="position:absolute;left:1972.39px;top:1334.69px;font-size:22.71px;line-height:1;font-weight:normal;color:#f4f4f4;white-space:nowrap;transform:scaleX(1.4219);transform-origin:0 0;-webkit-text-stroke:0.45px #f4f4f4;">2.5040</div>
<div style="position:absolute;left:1410.65px;top:1041.26px;font-size:22.29px;line-height:1;font-weight:bold;color:#f4f4f4;white-space:nowrap;transform:scaleX(1.2756);transform-origin:0 0;">20%</div>
<div style="position:absolute;left:1563.72px;top:1041.26px;font-size:22.29px;line-height:1;font-weight:bold;color:#f4f4f4;white-space:nowrap;transform:scaleX(1.2627);transform-origin:0 0;">40%</div>
<div style="position:absolute;left:1715.65px;top:1041.26px;font-size:22.29px;line-height:1;font-weight:bold;color:#f4f4f4;white-space:nowrap;transform:scaleX(1.2756);transform-origin:0 0;">60%</div>
<div style="position:absolute;left:1868.15px;top:1041.26px;font-size:22.29px;line-height:1;font-weight:bold;color:#f4f4f4;white-space:nowrap;transform:scaleX(1.2756);transform-origin:0 0;">80%</div>
<div style="position:absolute;left:2002.95px;top:1041.26px;font-size:22.29px;line-height:1;font-weight:bold;color:#f4f4f4;white-space:nowrap;transform:scaleX(1.3090);transform-origin:0 0;">100%</div>
<div style="position:absolute;left:1577px;top:231px;width:983px;height:790px;background:#1c1c1c"></div>
<div style="position:absolute;left:1587px;top:241px;width:963px;height:770px;background:#333"></div>
<div style="position:absolute;left:2007.78px;top:248.84px;font-size:21.07px;line-height:1;font-weight:normal;color:#dcdcdc;white-space:nowrap;transform:scaleX(0.9706);transform-origin:0 0;">CIE 1976 u'v'</div>
<div style="position:absolute;left:1641px;top:275px;width:903px;height:694px;background:#222"></div>
<div style="position:absolute;left:1639px;top:970px;width:2px;height:9px;background:#ddd"></div>
<div style="position:absolute;left:1634.56px;top:982.77px;font-size:20.86px;line-height:1;font-weight:normal;color:#dcdcdc;white-space:nowrap;">0</div>
<div style="position:absolute;left:1714px;top:970px;width:2px;height:9px;background:#ddd"></div>
<div style="position:absolute;left:1695.42px;top:982.77px;font-size:20.86px;line-height:1;font-weight:normal;color:#dcdcdc;white-space:nowrap;">0.05</div>
<div style="position:absolute;left:1790px;top:970px;width:2px;height:9px;background:#ddd"></div>
<div style="position:absolute;left:1776.67px;top:982.77px;font-size:20.86px;line-height:1;font-weight:normal;color:#dcdcdc;white-space:nowrap;">0.1</div>
<div style="position:absolute;left:1865px;top:970px;width:2px;height:9px;background:#ddd"></div>
<div style="position:absolute;left:1846.12px;top:982.77px;font-size:20.86px;line-height:1;font-weight:normal;color:#dcdcdc;white-space:nowrap;">0.15</div>
<div style="position:absolute;left:1940px;top:970px;width:2px;height:9px;background:#ddd"></div>
<div style="position:absolute;left:1927.37px;top:982.77px;font-size:20.86px;line-height:1;font-weight:normal;color:#dcdcdc;white-space:nowrap;">0.2</div>
<div style="position:absolute;left:2016px;top:970px;width:2px;height:9px;background:#ddd"></div>
<div style="position:absolute;left:1996.82px;top:982.77px;font-size:20.86px;line-height:1;font-weight:normal;color:#dcdcdc;white-space:nowrap;">0.25</div>
<div style="position:absolute;left:2091px;top:970px;width:2px;height:9px;background:#ddd"></div>
<div style="position:absolute;left:2077.97px;top:982.77px;font-size:20.86px;line-height:1;font-weight:normal;color:#dcdcdc;white-space:nowrap;">0.3</div>
<div style="position:absolute;left:2166px;top:970px;width:2px;height:9px;background:#ddd"></div>
<div style="position:absolute;left:2147.52px;top:982.77px;font-size:20.86px;line-height:1;font-weight:normal;color:#dcdcdc;white-space:nowrap;">0.35</div>
<div style="position:absolute;left:2242px;top:970px;width:2px;height:9px;background:#ddd"></div>
<div style="position:absolute;left:2228.56px;top:982.77px;font-size:20.86px;line-height:1;font-weight:normal;color:#dcdcdc;white-space:nowrap;">0.4</div>
<div style="position:absolute;left:2317px;top:970px;width:2px;height:9px;background:#ddd"></div>
<div style="position:absolute;left:2298.22px;top:982.77px;font-size:20.86px;line-height:1;font-weight:normal;color:#dcdcdc;white-space:nowrap;">0.45</div>
<div style="position:absolute;left:2393px;top:970px;width:2px;height:9px;background:#ddd"></div>
<div style="position:absolute;left:2379.37px;top:982.77px;font-size:20.86px;line-height:1;font-weight:normal;color:#dcdcdc;white-space:nowrap;">0.5</div>
<div style="position:absolute;left:2468px;top:970px;width:2px;height:9px;background:#ddd"></div>
<div style="position:absolute;left:2448.92px;top:982.77px;font-size:20.86px;line-height:1;font-weight:normal;color:#dcdcdc;white-space:nowrap;">0.55</div>
<div style="position:absolute;left:1631px;top:969px;width:9px;height:2px;background:#ddd"></div>
<div style="position:absolute;left:1619.30px;top:962.51px;font-size:20.57px;line-height:1;font-weight:normal;color:#dcdcdc;white-space:nowrap;">0</div>
<div style="position:absolute;left:1631px;top:911px;width:9px;height:2px;background:#ddd"></div>
<div style="position:absolute;left:1589.07px;top:901.69px;font-size:21.43px;line-height:1;font-weight:normal;color:#dcdcdc;white-space:nowrap;">0.05</div>
<div style="position:absolute;left:1631px;top:853px;width:9px;height:2px;background:#ddd"></div>
<div style="position:absolute;left:1601.20px;top:843.89px;font-size:21.43px;line-height:1;font-weight:normal;color:#dcdcdc;white-space:nowrap;">0.1</div>
<div style="position:absolute;left:1631px;top:796px;width:9px;height:2px;background:#ddd"></div>
<div style="position:absolute;left:1589.07px;top:786.09px;font-size:21.43px;line-height:1;font-weight:normal;color:#dcdcdc;white-space:nowrap;">0.15</div>
<div style="position:absolute;left:1631px;top:738px;width:9px;height:2px;background:#ddd"></div>
<div style="position:absolute;left:1601.20px;top:728.29px;font-size:21.43px;line-height:1;font-weight:normal;color:#dcdcdc;white-space:nowrap;">0.2</div>
<div style="position:absolute;left:1631px;top:680px;width:9px;height:2px;background:#ddd"></div>
<div style="position:absolute;left:1589.07px;top:670.49px;font-size:21.43px;line-height:1;font-weight:normal;color:#dcdcdc;white-space:nowrap;">0.25</div>
<div style="position:absolute;left:1631px;top:622px;width:9px;height:2px;background:#ddd"></div>
<div style="position:absolute;left:1600.99px;top:612.69px;font-size:21.43px;line-height:1;font-weight:normal;color:#dcdcdc;white-space:nowrap;">0.3</div>
<div style="position:absolute;left:1631px;top:564px;width:9px;height:2px;background:#ddd"></div>
<div style="position:absolute;left:1589.07px;top:554.89px;font-size:21.43px;line-height:1;font-weight:normal;color:#dcdcdc;white-space:nowrap;">0.35</div>
<div style="position:absolute;left:1631px;top:507px;width:9px;height:2px;background:#ddd"></div>
<div style="position:absolute;left:1600.77px;top:497.09px;font-size:21.43px;line-height:1;font-weight:normal;color:#dcdcdc;white-space:nowrap;">0.4</div>
<div style="position:absolute;left:1631px;top:449px;width:9px;height:2px;background:#ddd"></div>
<div style="position:absolute;left:1589.07px;top:439.29px;font-size:21.43px;line-height:1;font-weight:normal;color:#dcdcdc;white-space:nowrap;">0.45</div>
<div style="position:absolute;left:1631px;top:391px;width:9px;height:2px;background:#ddd"></div>
<div style="position:absolute;left:1600.99px;top:381.49px;font-size:21.43px;line-height:1;font-weight:normal;color:#dcdcdc;white-space:nowrap;">0.5</div>
<div style="position:absolute;left:1631px;top:333px;width:9px;height:2px;background:#ddd"></div>
<div style="position:absolute;left:1589.07px;top:323.69px;font-size:21.43px;line-height:1;font-weight:normal;color:#dcdcdc;white-space:nowrap;">0.55</div>
<svg style="position:absolute;left:1641px;top:275px" width="903" height="694" shape-rendering="crispEdges"><defs><clipPath id="lc"><path d="M384.3,674.1 C384.2,674.1 384.0,674.2 383.8,674.3 C383.5,674.3 383.3,674.4 382.9,674.4 C382.6,674.5 382.4,674.8 381.9,674.6 C381.3,674.5 381.6,674.9 379.8,673.7 C378.0,672.5 373.7,669.5 371.0,667.4 C368.3,665.4 366.3,663.8 363.5,661.4 C360.7,659.1 357.7,656.4 354.1,653.5 C350.5,650.5 346.8,647.4 342.1,643.6 C337.5,639.8 332.2,635.5 326.4,630.8 C320.6,626.0 314.5,621.1 307.4,615.0 C300.3,608.8 292.6,602.2 284.0,593.9 C275.5,585.7 266.9,577.7 255.9,565.4 C245.0,553.2 232.3,538.2 218.6,520.5 C205.0,502.7 189.5,481.8 174.1,458.7 C158.6,435.7 141.6,408.6 125.7,381.9 C109.9,355.3 93.1,326.0 79.2,298.9 C65.4,271.7 53.0,243.6 42.8,219.1 C32.6,194.6 24.3,171.4 18.0,151.9 C11.7,132.3 7.8,116.0 5.1,101.9 C2.3,87.8 1.5,76.9 1.7,67.1 C1.9,57.3 3.6,49.7 6.3,43.2 C8.9,36.7 12.9,31.8 17.5,28.0 C22.1,24.2 27.9,22.0 33.8,20.3 C39.8,18.5 46.5,18.0 53.3,17.4 C60.0,16.8 67.3,16.8 74.4,16.7 C81.6,16.6 88.6,16.8 96.0,17.0 C103.3,17.2 110.6,17.6 118.4,18.0 C126.2,18.5 134.2,19.1 142.6,19.8 C151.0,20.4 159.7,21.2 168.8,22.1 C178.0,23.0 187.6,24.0 197.7,25.0 C207.9,26.1 218.5,27.2 229.7,28.5 C241.0,29.7 252.7,31.0 265.1,32.4 C277.5,33.8 290.6,35.3 304.3,36.8 C318.0,38.4 332.4,40.0 347.4,41.7 C362.4,43.5 378.1,45.3 394.4,47.1 C410.6,49.0 427.6,51.0 445.0,52.9 C462.4,54.9 480.5,57.0 498.6,59.1 C516.7,61.1 535.6,63.3 553.7,65.4 C571.7,67.5 589.5,69.5 607.0,71.5 C624.6,73.5 642.5,75.6 659.0,77.5 C675.5,79.4 691.3,81.1 706.0,82.8 C720.8,84.5 734.8,86.1 747.6,87.6 C760.5,89.1 772.2,90.4 783.0,91.7 C793.9,92.9 803.6,94.0 812.7,95.1 C821.8,96.1 829.9,97.0 837.7,97.9 C845.4,98.8 852.7,99.7 859.3,100.4 C866.0,101.2 872.1,101.9 877.6,102.5 C883.2,103.2 888.1,103.7 892.4,104.2 C896.8,104.7 899.4,105.0 903.9,105.5 C908.5,106.0 914.7,106.8 919.6,107.3 C924.5,107.9 930.0,108.5 933.2,108.9 C936.3,109.3 937.6,109.4 938.5,109.5 Z"/></clipPath></defs><g clip-path="url(#lc)"><rect x="24" y="12" width="168" height="12" fill="#090"/><rect x="0" y="24" width="192" height="12" fill="#090"/><rect x="192" y="24" width="12" height="12" fill="#190"/><rect x="204" y="24" width="12" height="12" fill="#290"/><rect x="216" y="24" width="12" height="12" fill="#390"/><rect x="228" y="24" width="12" height="12" fill="#490"/><rect x="240" y="24" width="12" height="12" fill="#590"/><rect x="252" y="24" width="24" height="12" fill="#690"/><rect x="276" y="24" width="12" height="12" fill="#790"/><rect x="288" y="24" width="12" height="12" fill="#890"/><rect x="0" y="36" width="120" height="12" fill="#091"/><rect x="120" y="36" width="72" height="12" fill="#090"/><rect x="192" y="36" width="12" height="12" fill="#190"/><rect x="204" y="36" width="12" height="12" fill="#290"/><rect x="216" y="36" width="12" height="12" fill="#390"/><rect x="228" y="36" width="12" height="12" fill="#490"/><rect x="240" y="36" width="12" height="12" fill="#590"/><rect x="252" y="36" width="24" height="12" fill="#690"/><rect x="276" y="36" width="12" height="12" fill="#790"/><rect x="288" y="36" width="12" height="12" fill="#890"/><rect x="300" y="36" width="12" height="12" fill="#990"/><rect x="312" y="36" width="24" height="12" fill="#980"/><rect x="336" y="36" width="12" height="12" fill="#970"/><rect x="348" y="36" width="36" height="12" fill="#960"/><rect x="384" y="36" width="24" height="12" fill="#950"/><rect x="0" y="48" width="96" height="12" fill="#092"/><rect x="96" y="48" width="96" height="12" fill="#091"/><rect x="192" y="48" width="12" height="12" fill="#2f2"/><rect x="204" y="48" width="12" height="12" fill="#4f1"/><rect x="216" y="48" width="12" height="12" fill="#5f1"/><rect x="228" y="48" width="12" height="12" fill="#6f1"/><rect x="240" y="48" width="12" height="12" fill="#8f1"/><rect x="252" y="48" width="12" height="12" fill="#9f1"/><rect x="264" y="48" width="12" height="12" fill="#bf1"/><rect x="276" y="48" width="12" height="12" fill="#cf0"/><rect x="288" y="48" width="12" height="12" fill="#890"/><rect x="300" y="48" width="12" height="12" fill="#990"/><rect x="312" y="48" width="24" height="12" fill="#980"/><rect x="336" y="48" width="12" height="12" fill="#970"/><rect x="348" y="48" width="24" height="12" fill="#960"/><rect x="372" y="48" width="36" height="12" fill="#950"/><rect x="408" y="48" width="48" height="12" fill="#940"/><rect x="456" y="48" width="60" height="12" fill="#930"/><rect x="0" y="60" width="192" height="12" fill="#092"/><rect x="192" y="60" width="12" height="12" fill="#2f3"/><rect x="204" y="60" width="12" height="12" fill="#3f3"/><rect x="216" y="60" width="12" height="12" fill="#5f3"/><rect x="228" y="60" width="12" height="12" fill="#6f3"/><rect x="240" y="60" width="12" height="12" fill="#8f3"/><rect x="252" y="60" width="12" height="12" fill="#9f3"/><rect x="264" y="60" width="12" height="12" fill="#bf3"/><rect x="276" y="60" width="12" height="12" fill="#cf3"/><rect x="288" y="60" width="12" height="12" fill="#ef2"/><rect x="300" y="60" width="12" height="12" fill="#ff2"/><rect x="312" y="60" width="12" height="12" fill="#fe2"/><rect x="324" y="60" width="12" height="12" fill="#fc2"/><rect x="336" y="60" width="12" height="12" fill="#fb1"/><rect x="348" y="60" width="24" height="12" fill="#fa1"/><rect x="372" y="60" width="12" height="12" fill="#f91"/><rect x="384" y="60" width="12" height="12" fill="#f81"/><rect x="396" y="60" width="12" height="12" fill="#f80"/><rect x="408" y="60" width="12" height="12" fill="#f70"/><rect x="420" y="60" width="24" height="12" fill="#940"/><rect x="444" y="60" width="60" height="12" fill="#930"/><rect x="504" y="60" width="72" height="12" fill="#920"/><rect x="576" y="60" width="36" height="12" fill="#910"/><rect x="0" y="72" width="192" height="12" fill="#093"/><rect x="192" y="72" width="12" height="12" fill="#1f5"/><rect x="204" y="72" width="12" height="12" fill="#3f5"/><rect x="216" y="72" width="12" height="12" fill="#5f5"/><rect x="228" y="72" width="12" height="12" fill="#6f5"/><rect x="240" y="72" width="12" height="12" fill="#8f5"/><rect x="252" y="72" width="12" height="12" fill="#9f4"/><rect x="264" y="72" width="12" height="12" fill="#bf4"/><rect x="276" y="72" width="12" height="12" fill="#cf4"/><rect x="288" y="72" width="12" height="12" fill="#ef4"/><rect x="300" y="72" width="12" height="12" fill="#ff4"/><rect x="312" y="72" width="12" height="12" fill="#fd4"/><rect x="324" y="72" width="12" height="12" fill="#fc3"/><rect x="336" y="72" width="12" height="12" fill="#fb3"/><rect x="348" y="72" width="12" height="12" fill="#fa3"/><rect x="360" y="72" width="24" height="12" fill="#f92"/><rect x="384" y="72" width="24" height="12" fill="#f82"/><rect x="408" y="72" width="12" height="12" fill="#f72"/><rect x="420" y="72" width="36" height="12" fill="#f61"/><rect x="456" y="72" width="36" height="12" fill="#f51"/><rect x="492" y="72" width="12" height="12" fill="#f41"/><rect x="504" y="72" width="24" height="12" fill="#f40"/><rect x="528" y="72" width="12" height="12" fill="#f30"/><rect x="540" y="72" width="36" height="12" fill="#920"/><rect x="576" y="72" width="84" height="12" fill="#910"/><rect x="660" y="72" width="60" height="12" fill="#900"/><rect x="0" y="84" width="192" height="12" fill="#094"/><rect x="192" y="84" width="12" height="12" fill="#1f6"/><rect x="204" y="84" width="12" height="12" fill="#3f6"/><rect x="216" y="84" width="12" height="12" fill="#5f6"/><rect x="228" y="84" width="12" height="12" fill="#6f6"/><rect x="240" y="84" width="12" height="12" fill="#8f6"/><rect x="252" y="84" width="12" height="12" fill="#9f6"/><rect x="264" y="84" width="12" height="12" fill="#bf6"/><rect x="276" y="84" width="12" height="12" fill="#cf6"/><rect x="288" y="84" width="12" height="12" fill="#ef6"/><rect x="300" y="84" width="12" height="12" fill="#ff6"/><rect x="312" y="84" width="12" height="12" fill="#fd5"/><rect x="324" y="84" width="12" height="12" fill="#fc5"/><rect x="336" y="84" width="12" height="12" fill="#fb4"/><rect x="348" y="84" width="12" height="12" fill="#fa4"/><rect x="360" y="84" width="12" height="12" fill="#f94"/><rect x="372" y="84" width="12" height="12" fill="#f93"/><rect x="384" y="84" width="12" height="12" fill="#f83"/><rect x="396" y="84" width="24" height="12" fill="#f73"/><rect x="420" y="84" width="12" height="12" fill="#f63"/><rect x="432" y="84" width="12" height="12" fill="#f62"/><rect x="444" y="84" width="36" height="12" fill="#f52"/><rect x="480" y="84" width="24" height="12" fill="#f42"/><rect x="504" y="84" width="12" height="12" fill="#f41"/><rect x="516" y="84" width="48" height="12" fill="#f31"/><rect x="564" y="84" width="48" height="12" fill="#f21"/><rect x="612" y="84" width="12" height="12" fill="#f11"/><rect x="624" y="84" width="36" height="12" fill="#f10"/><rect x="660" y="84" width="12" height="12" fill="#f00"/><rect x="672" y="84" width="156" height="12" fill="#900"/><rect x="0" y="96" width="192" height="12" fill="#094"/><rect x="192" y="96" width="12" height="12" fill="#0f7"/><rect x="204" y="96" width="12" height="12" fill="#3f7"/><rect x="216" y="96" width="12" height="12" fill="#4f7"/><rect x="228" y="96" width="12" height="12" fill="#6f7"/><rect x="240" y="96" width="12" height="12" fill="#8f8"/><rect x="252" y="96" width="12" height="12" fill="#9f8"/><rect x="264" y="96" width="12" height="12" fill="#bf8"/><rect x="276" y="96" width="12" height="12" fill="#cf8"/><rect x="288" y="96" width="12" height="12" fill="#ef8"/><rect x="300" y="96" width="12" height="12" fill="#fe7"/><rect x="312" y="96" width="12" height="12" fill="#fd7"/><rect x="324" y="96" width="12" height="12" fill="#fc6"/><rect x="336" y="96" width="12" height="12" fill="#fb6"/><rect x="348" y="96" width="12" height="12" fill="#fa5"/><rect x="360" y="96" width="12" height="12" fill="#f95"/><rect x="372" y="96" width="12" height="12" fill="#f85"/><rect x="384" y="96" width="12" height="12" fill="#f84"/><rect x="396" y="96" width="24" height="12" fill="#f74"/><rect x="420" y="96" width="24" height="12" fill="#f63"/><rect x="444" y="96" width="36" height="12" fill="#f53"/><rect x="480" y="96" width="12" height="12" fill="#f43"/><rect x="492" y="96" width="24" height="12" fill="#f42"/><rect x="516" y="96" width="36" height="12" fill="#f32"/><rect x="552" y="96" width="36" height="12" fill="#f22"/><rect x="588" y="96" width="12" height="12" fill="#f21"/><rect x="600" y="96" width="48" height="12" fill="#f11"/><rect x="648" y="96" width="24" height="12" fill="#f01"/><rect x="672" y="96" width="12" height="12" fill="#901"/><rect x="684" y="96" width="219" height="12" fill="#900"/><rect x="0" y="108" width="204" height="12" fill="#095"/><rect x="204" y="108" width="12" height="12" fill="#2f9"/><rect x="216" y="108" width="12" height="12" fill="#4f9"/><rect x="228" y="108" width="12" height="12" fill="#6f9"/><rect x="240" y="108" width="12" height="12" fill="#8f9"/><rect x="252" y="108" width="12" height="12" fill="#9f9"/><rect x="264" y="108" width="12" height="12" fill="#bf9"/><rect x="276" y="108" width="12" height="12" fill="#cf9"/><rect x="288" y="108" width="12" height="12" fill="#ef9"/><rect x="300" y="108" width="12" height="12" fill="#fe9"/><rect x="312" y="108" width="12" height="12" fill="#fd8"/><rect x="324" y="108" width="12" height="12" fill="#fc8"/><rect x="336" y="108" width="12" height="12" fill="#fb7"/><rect x="348" y="108" width="12" height="12" fill="#fa6"/><rect x="360" y="108" width="12" height="12" fill="#f96"/><rect x="372" y="108" width="12" height="12" fill="#f86"/><rect x="384" y="108" width="12" height="12" fill="#f85"/><rect x="396" y="108" width="12" height="12" fill="#f75"/><rect x="408" y="108" width="12" height="12" fill="#f65"/><rect x="420" y="108" width="12" height="12" fill="#f64"/><rect x="432" y="108" width="36" height="12" fill="#f54"/><rect x="468" y="108" width="12" height="12" fill="#f44"/><rect x="480" y="108" width="24" height="12" fill="#f43"/><rect x="504" y="108" width="36" height="12" fill="#f33"/><rect x="540" y="108" width="12" height="12" fill="#f23"/><rect x="552" y="108" width="36" height="12" fill="#f22"/><rect x="588" y="108" width="48" height="12" fill="#f12"/><rect x="636" y="108" width="24" height="12" fill="#f02"/><rect x="660" y="108" width="132" height="12" fill="#901"/><rect x="792" y="108" width="111" height="12" fill="#900"/><rect x="0" y="120" width="60" height="12" fill="#095"/><rect x="60" y="120" width="144" height="12" fill="#096"/><rect x="204" y="120" width="12" height="12" fill="#2fa"/><rect x="216" y="120" width="12" height="12" fill="#4fa"/><rect x="228" y="120" width="12" height="12" fill="#6fa"/><rect x="240" y="120" width="12" height="12" fill="#7fa"/><rect x="252" y="120" width="12" height="12" fill="#9fb"/><rect x="264" y="120" width="12" height="12" fill="#bfb"/><rect x="276" y="120" width="12" height="12" fill="#cfb"/><rect x="288" y="120" width="12" height="12" fill="#efb"/><rect x="300" y="120" width="12" height="12" fill="#feb"/><rect x="312" y="120" width="12" height="12" fill="#fda"/><rect x="324" y="120" width="12" height="12" fill="#fb9"/><rect x="336" y="120" width="24" height="12" fill="#fa8"/><rect x="360" y="120" width="12" height="12" fill="#f97"/><rect x="372" y="120" width="12" height="12" fill="#f87"/><rect x="384" y="120" width="24" height="12" fill="#f76"/><rect x="408" y="120" width="12" height="12" fill="#f66"/><rect x="420" y="120" width="12" height="12" fill="#f65"/><rect x="432" y="120" width="24" height="12" fill="#f55"/><rect x="456" y="120" width="36" height="12" fill="#f44"/><rect x="492" y="120" width="36" height="12" fill="#f34"/><rect x="528" y="120" width="12" height="12" fill="#f33"/><rect x="540" y="120" width="48" height="12" fill="#f23"/><rect x="588" y="120" width="36" height="12" fill="#f13"/><rect x="624" y="120" width="24" height="12" fill="#f02"/><rect x="648" y="120" width="240" height="12" fill="#901"/><rect x="888" y="120" width="15" height="12" fill="#900"/><rect x="12" y="132" width="132" height="12" fill="#096"/><rect x="144" y="132" width="60" height="12" fill="#097"/><rect x="204" y="132" width="12" height="12" fill="#2fb"/><rect x="216" y="132" width="12" height="12" fill="#4fc"/><rect x="228" y="132" width="12" height="12" fill="#6fc"/><rect x="240" y="132" width="12" height="12" fill="#7fc"/><rect x="252" y="132" width="12" height="12" fill="#9fc"/><rect x="264" y="132" width="12" height="12" fill="#bfc"/><rect x="276" y="132" width="12" height="12" fill="#dfc"/><rect x="288" y="132" width="12" height="12" fill="#efd"/><rect x="300" y="132" width="12" height="12" fill="#fec"/><rect x="312" y="132" width="12" height="12" fill="#fcb"/><rect x="324" y="132" width="12" height="12" fill="#fba"/><rect x="336" y="132" width="12" height="12" fill="#fa9"/><rect x="348" y="132" width="12" height="12" fill="#f99"/><rect x="360" y="132" width="24" height="12" fill="#f88"/><rect x="384" y="132" width="24" height="12" fill="#f77"/><rect x="408" y="132" width="24" height="12" fill="#f66"/><rect x="432" y="132" width="12" height="12" fill="#f56"/><rect x="444" y="132" width="12" height="12" fill="#f55"/><rect x="456" y="132" width="36" height="12" fill="#f45"/><rect x="492" y="132" width="12" height="12" fill="#f35"/><rect x="504" y="132" width="24" height="12" fill="#f34"/><rect x="528" y="132" width="48" height="12" fill="#f24"/><rect x="576" y="132" width="36" height="12" fill="#f13"/><rect x="612" y="132" width="24" height="12" fill="#f03"/><rect x="636" y="132" width="48" height="12" fill="#902"/><rect x="684" y="132" width="219" height="12" fill="#901"/><rect x="12" y="144" width="168" height="12" fill="#097"/><rect x="180" y="144" width="24" height="12" fill="#098"/><rect x="204" y="144" width="12" height="12" fill="#2fd"/><rect x="216" y="144" width="12" height="12" fill="#4fd"/><rect x="228" y="144" width="12" height="12" fill="#6fd"/><rect x="240" y="144" width="12" height="12" fill="#7fd"/><rect x="252" y="144" width="12" height="12" fill="#9fe"/><rect x="264" y="144" width="12" height="12" fill="#bfe"/><rect x="276" y="144" width="12" height="12" fill="#dfe"/><rect x="288" y="144" width="12" height="12" fill="#efe"/><rect x="300" y="144" width="12" height="12" fill="#fed"/><rect x="312" y="144" width="12" height="12" fill="#fcc"/><rect x="324" y="144" width="12" height="12" fill="#fbb"/><rect x="336" y="144" width="12" height="12" fill="#faa"/><rect x="348" y="144" width="12" height="12" fill="#f9a"/><rect x="360" y="144" width="24" height="12" fill="#f89"/><rect x="384" y="144" width="12" height="12" fill="#f78"/><rect x="396" y="144" width="12" height="12" fill="#f68"/><rect x="408" y="144" width="12" height="12" fill="#f67"/><rect x="420" y="144" width="12" height="12" fill="#f57"/><rect x="432" y="144" width="12" height="12" fill="#f56"/><rect x="444" y="144" width="36" height="12" fill="#f46"/><rect x="480" y="144" width="36" height="12" fill="#f35"/><rect x="516" y="144" width="24" height="12" fill="#f25"/><rect x="540" y="144" width="24" height="12" fill="#f24"/><rect x="564" y="144" width="36" height="12" fill="#f14"/><rect x="600" y="144" width="24" height="12" fill="#f04"/><rect x="624" y="144" width="120" height="12" fill="#902"/><rect x="744" y="144" width="159" height="12" fill="#901"/><rect x="12" y="156" width="72" height="12" fill="#097"/><rect x="84" y="156" width="120" height="12" fill="#098"/><rect x="204" y="156" width="12" height="12" fill="#1fe"/><rect x="216" y="156" width="12" height="12" fill="#3fe"/><rect x="228" y="156" width="12" height="12" fill="#5ff"/><rect x="240" y="156" width="12" height="12" fill="#7ff"/><rect x="252" y="156" width="12" height="12" fill="#9ff"/><rect x="264" y="156" width="12" height="12" fill="#bef"/><rect x="276" y="156" width="12" height="12" fill="#cef"/><rect x="288" y="156" width="12" height="12" fill="#eef"/><rect x="300" y="156" width="12" height="12" fill="#fef"/><rect x="312" y="156" width="12" height="12" fill="#fce"/><rect x="324" y="156" width="12" height="12" fill="#fbd"/><rect x="336" y="156" width="12" height="12" fill="#fac"/><rect x="348" y="156" width="12" height="12" fill="#f9b"/><rect x="360" y="156" width="12" height="12" fill="#f8a"/><rect x="372" y="156" width="24" height="12" fill="#f79"/><rect x="396" y="156" width="24" height="12" fill="#f68"/><rect x="420" y="156" width="12" height="12" fill="#f58"/><rect x="432" y="156" width="12" height="12" fill="#f57"/><rect x="444" y="156" width="24" height="12" fill="#f47"/><rect x="468" y="156" width="12" height="12" fill="#f46"/><rect x="480" y="156" width="36" height="12" fill="#f36"/><rect x="516" y="156" width="36" height="12" fill="#f25"/><rect x="552" y="156" width="24" height="12" fill="#f15"/><rect x="576" y="156" width="12" height="12" fill="#f14"/><rect x="588" y="156" width="24" height="12" fill="#f04"/><rect x="612" y="156" width="192" height="12" fill="#902"/><rect x="804" y="156" width="96" height="12" fill="#901"/><rect x="12" y="168" width="108" height="12" fill="#098"/><rect x="120" y="168" width="84" height="12" fill="#099"/><rect x="204" y="168" width="12" height="12" fill="#1ef"/><rect x="216" y="168" width="12" height="12" fill="#3ef"/><rect x="228" y="168" width="12" height="12" fill="#5ef"/><rect x="240" y="168" width="12" height="12" fill="#6ef"/><rect x="252" y="168" width="12" height="12" fill="#8df"/><rect x="264" y="168" width="12" height="12" fill="#9df"/><rect x="276" y="168" width="12" height="12" fill="#bdf"/><rect x="288" y="168" width="12" height="12" fill="#ccf"/><rect x="300" y="168" width="12" height="12" fill="#ecf"/><rect x="312" y="168" width="12" height="12" fill="#fcf"/><rect x="324" y="168" width="12" height="12" fill="#fbe"/><rect x="336" y="168" width="12" height="12" fill="#fad"/><rect x="348" y="168" width="12" height="12" fill="#f9c"/><rect x="360" y="168" width="12" height="12" fill="#f8b"/><rect x="372" y="168" width="12" height="12" fill="#f7a"/><rect x="384" y="168" width="12" height="12" fill="#f6a"/><rect x="396" y="168" width="12" height="12" fill="#f69"/><rect x="408" y="168" width="12" height="12" fill="#f59"/><rect x="420" y="168" width="12" height="12" fill="#f58"/><rect x="432" y="168" width="24" height="12" fill="#f48"/><rect x="456" y="168" width="12" height="12" fill="#f47"/><rect x="468" y="168" width="24" height="12" fill="#f37"/><rect x="492" y="168" width="12" height="12" fill="#f36"/><rect x="504" y="168" width="36" height="12" fill="#f26"/><rect x="540" y="168" width="12" height="12" fill="#f16"/><rect x="552" y="168" width="36" height="12" fill="#f15"/><rect x="588" y="168" width="12" height="12" fill="#f05"/><rect x="600" y="168" width="48" height="12" fill="#903"/><rect x="648" y="168" width="228" height="12" fill="#902"/><rect x="876" y="168" width="12" height="12" fill="#901"/><rect x="24" y="180" width="24" height="12" fill="#098"/><rect x="48" y="180" width="108" height="12" fill="#099"/><rect x="156" y="180" width="60" height="12" fill="#089"/><rect x="216" y="180" width="12" height="12" fill="#2df"/><rect x="228" y="180" width="12" height="12" fill="#4df"/><rect x="240" y="180" width="12" height="12" fill="#6cf"/><rect x="252" y="180" width="12" height="12" fill="#7cf"/><rect x="264" y="180" width="12" height="12" fill="#9cf"/><rect x="276" y="180" width="12" height="12" fill="#acf"/><rect x="288" y="180" width="12" height="12" fill="#bbf"/><rect x="300" y="180" width="12" height="12" fill="#dbf"/><rect x="312" y="180" width="12" height="12" fill="#ebf"/><rect x="324" y="180" width="12" height="12" fill="#faf"/><rect x="336" y="180" width="12" height="12" fill="#f9e"/><rect x="348" y="180" width="12" height="12" fill="#f8d"/><rect x="360" y="180" width="12" height="12" fill="#f8c"/><rect x="372" y="180" width="12" height="12" fill="#f7b"/><rect x="384" y="180" width="12" height="12" fill="#f6b"/><rect x="396" y="180" width="12" height="12" fill="#f6a"/><rect x="408" y="180" width="12" height="12" fill="#f5a"/><rect x="420" y="180" width="12" height="12" fill="#f59"/><rect x="432" y="180" width="12" height="12" fill="#f49"/><rect x="444" y="180" width="12" height="12" fill="#f48"/><rect x="456" y="180" width="24" height="12" fill="#f38"/><rect x="480" y="180" width="12" height="12" fill="#f37"/><rect x="492" y="180" width="36" height="12" fill="#f27"/><rect x="528" y="180" width="48" height="12" fill="#f16"/><rect x="576" y="180" width="12" height="12" fill="#f05"/><rect x="588" y="180" width="108" height="12" fill="#903"/><rect x="696" y="180" width="180" height="12" fill="#902"/><rect x="24" y="192" width="60" height="12" fill="#099"/><rect x="84" y="192" width="96" height="12" fill="#089"/><rect x="180" y="192" width="36" height="12" fill="#079"/><rect x="216" y="192" width="12" height="12" fill="#2cf"/><rect x="228" y="192" width="12" height="12" fill="#4cf"/><rect x="240" y="192" width="12" height="12" fill="#5bf"/><rect x="252" y="192" width="12" height="12" fill="#7bf"/><rect x="264" y="192" width="12" height="12" fill="#8bf"/><rect x="276" y="192" width="12" height="12" fill="#9bf"/><rect x="288" y="192" width="12" height="12" fill="#aaf"/><rect x="300" y="192" width="12" height="12" fill="#caf"/><rect x="312" y="192" width="12" height="12" fill="#daf"/><rect x="324" y="192" width="12" height="12" fill="#e9f"/><rect x="336" y="192" width="12" height="12" fill="#f9f"/><rect x="348" y="192" width="12" height="12" fill="#f8e"/><rect x="360" y="192" width="12" height="12" fill="#f7d"/><rect x="372" y="192" width="12" height="12" fill="#f7c"/><rect x="384" y="192" width="12" height="12" fill="#f6c"/><rect x="396" y="192" width="12" height="12" fill="#f5b"/><rect x="408" y="192" width="12" height="12" fill="#f5a"/><rect x="420" y="192" width="12" height="12" fill="#f4a"/><rect x="432" y="192" width="24" height="12" fill="#f49"/><rect x="456" y="192" width="12" height="12" fill="#f39"/><rect x="468" y="192" width="12" height="12" fill="#f38"/><rect x="480" y="192" width="24" height="12" fill="#f28"/><rect x="504" y="192" width="24" height="12" fill="#f27"/><rect x="528" y="192" width="24" height="12" fill="#f17"/><rect x="552" y="192" width="12" height="12" fill="#f16"/><rect x="564" y="192" width="12" height="12" fill="#f06"/><rect x="576" y="192" width="12" height="12" fill="#904"/><rect x="588" y="192" width="144" height="12" fill="#903"/><rect x="732" y="192" width="132" height="12" fill="#902"/><rect x="36" y="204" width="96" height="12" fill="#089"/><rect x="132" y="204" width="84" height="12" fill="#079"/><rect x="216" y="204" width="12" height="12" fill="#2bf"/><rect x="228" y="204" width="12" height="12" fill="#3bf"/><rect x="240" y="204" width="12" height="12" fill="#5af"/><rect x="252" y="204" width="12" height="12" fill="#6af"/><rect x="264" y="204" width="12" height="12" fill="#7af"/><rect x="276" y="204" width="12" height="12" fill="#8af"/><rect x="288" y="204" width="12" height="12" fill="#a9f"/><rect x="300" y="204" width="12" height="12" fill="#b9f"/><rect x="312" y="204" width="12" height="12" fill="#c9f"/><rect x="324" y="204" width="12" height="12" fill="#d9f"/><rect x="336" y="204" width="12" height="12" fill="#e8f"/><rect x="348" y="204" width="12" height="12" fill="#f8f"/><rect x="360" y="204" width="12" height="12" fill="#f7e"/><rect x="372" y="204" width="12" height="12" fill="#f6d"/><rect x="384" y="204" width="12" height="12" fill="#f6c"/><rect x="396" y="204" width="12" height="12" fill="#f5c"/><rect x="408" y="204" width="12" height="12" fill="#f5b"/><rect x="420" y="204" width="12" height="12" fill="#f4b"/><rect x="432" y="204" width="12" height="12" fill="#f4a"/><rect x="444" y="204" width="12" height="12" fill="#f3a"/><rect x="456" y="204" width="24" height="12" fill="#f39"/><rect x="480" y="204" width="12" height="12" fill="#f29"/><rect x="492" y="204" width="24" height="12" fill="#f28"/><rect x="516" y="204" width="12" height="12" fill="#f18"/><rect x="528" y="204" width="24" height="12" fill="#f17"/><rect x="552" y="204" width="12" height="12" fill="#f07"/><rect x="564" y="204" width="60" height="12" fill="#904"/><rect x="624" y="204" width="156" height="12" fill="#903"/><rect x="780" y="204" width="72" height="12" fill="#902"/><rect x="36" y="216" width="36" height="12" fill="#089"/><rect x="72" y="216" width="108" height="12" fill="#079"/><rect x="180" y="216" width="36" height="12" fill="#069"/><rect x="216" y="216" width="12" height="12" fill="#1af"/><rect x="228" y="216" width="12" height="12" fill="#3af"/><rect x="240" y="216" width="12" height="12" fill="#4af"/><rect x="252" y="216" width="12" height="12" fill="#69f"/><rect x="264" y="216" width="12" height="12" fill="#79f"/><rect x="276" y="216" width="12" height="12" fill="#89f"/><rect x="288" y="216" width="12" height="12" fill="#99f"/><rect x="300" y="216" width="12" height="12" fill="#a8f"/><rect x="312" y="216" width="12" height="12" fill="#b8f"/><rect x="324" y="216" width="12" height="12" fill="#c8f"/><rect x="336" y="216" width="12" height="12" fill="#d7f"/><rect x="348" y="216" width="12" height="12" fill="#e7f"/><rect x="360" y="216" width="12" height="12" fill="#f7f"/><rect x="372" y="216" width="12" height="12" fill="#f6e"/><rect x="384" y="216" width="12" height="12" fill="#f6d"/><rect x="396" y="216" width="12" height="12" fill="#f5d"/><rect x="408" y="216" width="12" height="12" fill="#f4c"/><rect x="420" y="216" width="24" height="12" fill="#f4b"/><rect x="444" y="216" width="24" height="12" fill="#f3a"/><rect x="468" y="216" width="12" height="12" fill="#f2a"/><rect x="480" y="216" width="24" height="12" fill="#f29"/><rect x="504" y="216" width="36" height="12" fill="#f18"/><rect x="540" y="216" width="12" height="12" fill="#f08"/><rect x="552" y="216" width="108" height="12" fill="#904"/><rect x="660" y="216" width="168" height="12" fill="#903"/><rect x="828" y="216" width="12" height="12" fill="#902"/><rect x="36" y="228" width="96" height="12" fill="#079"/><rect x="132" y="228" width="84" height="12" fill="#069"/><rect x="216" y="228" width="12" height="12" fill="#19f"/><rect x="228" y="228" width="12" height="12" fill="#39f"/><rect x="240" y="228" width="12" height="12" fill="#49f"/><rect x="252" y="228" width="12" height="12" fill="#59f"/><rect x="264" y="228" width="12" height="12" fill="#68f"/><rect x="276" y="228" width="12" height="12" fill="#78f"/><rect x="288" y="228" width="12" height="12" fill="#88f"/><rect x="300" y="228" width="12" height="12" fill="#98f"/><rect x="312" y="228" width="12" height="12" fill="#a7f"/><rect x="324" y="228" width="12" height="12" fill="#b7f"/><rect x="336" y="228" width="12" height="12" fill="#c7f"/><rect x="348" y="228" width="12" height="12" fill="#d6f"/><rect x="360" y="228" width="12" height="12" fill="#e6f"/><rect x="372" y="228" width="12" height="12" fill="#f6f"/><rect x="384" y="228" width="12" height="12" fill="#f5e"/><rect x="396" y="228" width="12" height="12" fill="#f5d"/><rect x="408" y="228" width="12" height="12" fill="#f4d"/><rect x="420" y="228" width="12" height="12" fill="#f4c"/><rect x="432" y="228" width="12" height="12" fill="#f3c"/><rect x="444" y="228" width="12" height="12" fill="#f3b"/><rect x="456" y="228" width="12" height="12" fill="#f2b"/><rect x="468" y="228" width="24" height="12" fill="#f2a"/><rect x="492" y="228" width="36" height="12" fill="#f19"/><rect x="528" y="228" width="12" height="12" fill="#f08"/><rect x="540" y="228" width="36" height="12" fill="#905"/><rect x="576" y="228" width="108" height="12" fill="#904"/><rect x="684" y="228" width="144" height="12" fill="#903"/><rect x="48" y="240" width="36" height="12" fill="#079"/><rect x="84" y="240" width="108" height="12" fill="#069"/><rect x="192" y="240" width="24" height="12" fill="#059"/><rect x="216" y="240" width="12" height="12" fill="#09f"/><rect x="228" y="240" width="12" height="12" fill="#28f"/><rect x="240" y="240" width="12" height="12" fill="#38f"/><rect x="252" y="240" width="12" height="12" fill="#58f"/><rect x="264" y="240" width="12" height="12" fill="#68f"/><rect x="276" y="240" width="12" height="12" fill="#77f"/><rect x="288" y="240" width="12" height="12" fill="#87f"/><rect x="300" y="240" width="12" height="12" fill="#97f"/><rect x="312" y="240" width="12" height="12" fill="#a7f"/><rect x="324" y="240" width="24" height="12" fill="#b6f"/><rect x="348" y="240" width="12" height="12" fill="#c6f"/><rect x="360" y="240" width="12" height="12" fill="#d6f"/><rect x="372" y="240" width="12" height="12" fill="#e5f"/><rect x="384" y="240" width="12" height="12" fill="#f5f"/><rect x="396" y="240" width="12" height="12" fill="#f4e"/><rect x="408" y="240" width="12" height="12" fill="#f4d"/><rect x="420" y="240" width="12" height="12" fill="#f3d"/><rect x="432" y="240" width="24" height="12" fill="#f3c"/><rect x="456" y="240" width="24" height="12" fill="#f2b"/><rect x="480" y="240" width="36" height="12" fill="#f1a"/><rect x="516" y="240" width="12" height="12" fill="#f09"/><rect x="528" y="240" width="72" height="12" fill="#905"/><rect x="600" y="240" width="120" height="12" fill="#904"/><rect x="720" y="240" width="96" height="12" fill="#903"/><rect x="48" y="252" width="96" height="12" fill="#069"/><rect x="144" y="252" width="84" height="12" fill="#059"/><rect x="228" y="252" width="12" height="12" fill="#28f"/><rect x="240" y="252" width="12" height="12" fill="#38f"/><rect x="252" y="252" width="12" height="12" fill="#47f"/><rect x="264" y="252" width="12" height="12" fill="#57f"/><rect x="276" y="252" width="12" height="12" fill="#67f"/><rect x="288" y="252" width="12" height="12" fill="#77f"/><rect x="300" y="252" width="12" height="12" fill="#86f"/><rect x="312" y="252" width="12" height="12" fill="#96f"/><rect x="324" y="252" width="12" height="12" fill="#a6f"/><rect x="336" y="252" width="12" height="12" fill="#b6f"/><rect x="348" y="252" width="12" height="12" fill="#c5f"/><rect x="360" y="252" width="24" height="12" fill="#d5f"/><rect x="384" y="252" width="12" height="12" fill="#e4f"/><rect x="396" y="252" width="12" height="12" fill="#f4f"/><rect x="408" y="252" width="12" height="12" fill="#f4e"/><rect x="420" y="252" width="12" height="12" fill="#f3e"/><rect x="432" y="252" width="12" height="12" fill="#f3d"/><rect x="444" y="252" width="24" height="12" fill="#f2c"/><rect x="468" y="252" width="36" height="12" fill="#f1b"/><rect x="504" y="252" width="12" height="12" fill="#f0a"/><rect x="516" y="252" width="24" height="12" fill="#906"/><rect x="540" y="252" width="84" height="12" fill="#905"/><rect x="624" y="252" width="132" height="12" fill="#904"/><rect x="756" y="252" width="48" height="12" fill="#903"/><rect x="60" y="264" width="48" height="12" fill="#069"/><rect x="108" y="264" width="108" height="12" fill="#059"/><rect x="216" y="264" width="12" height="12" fill="#049"/><rect x="228" y="264" width="12" height="12" fill="#27f"/><rect x="240" y="264" width="12" height="12" fill="#37f"/><rect x="252" y="264" width="12" height="12" fill="#47f"/><rect x="264" y="264" width="12" height="12" fill="#57f"/><rect x="276" y="264" width="12" height="12" fill="#66f"/><rect x="288" y="264" width="12" height="12" fill="#76f"/><rect x="300" y="264" width="12" height="12" fill="#86f"/><rect x="312" y="264" width="12" height="12" fill="#96f"/><rect x="324" y="264" width="12" height="12" fill="#95f"/><rect x="336" y="264" width="12" height="12" fill="#a5f"/><rect x="348" y="264" width="12" height="12" fill="#b5f"/><rect x="360" y="264" width="12" height="12" fill="#c5f"/><rect x="372" y="264" width="24" height="12" fill="#d4f"/><rect x="396" y="264" width="12" height="12" fill="#e4f"/><rect x="408" y="264" width="12" height="12" fill="#f3f"/><rect x="420" y="264" width="12" height="12" fill="#f3e"/><rect x="432" y="264" width="12" height="12" fill="#f2e"/><rect x="444" y="264" width="12" height="12" fill="#f2d"/><rect x="456" y="264" width="12" height="12" fill="#f2c"/><rect x="468" y="264" width="24" height="12" fill="#f1c"/><rect x="492" y="264" width="12" height="12" fill="#f0b"/><rect x="504" y="264" width="60" height="12" fill="#906"/><rect x="564" y="264" width="84" height="12" fill="#905"/><rect x="648" y="264" width="132" height="12" fill="#904"/><rect x="780" y="264" width="12" height="12" fill="#903"/><rect x="60" y="276" width="12" height="12" fill="#069"/><rect x="72" y="276" width="108" height="12" fill="#059"/><rect x="180" y="276" width="48" height="12" fill="#049"/><rect x="228" y="276" width="12" height="12" fill="#17f"/><rect x="240" y="276" width="12" height="12" fill="#36f"/><rect x="252" y="276" width="12" height="12" fill="#46f"/><rect x="264" y="276" width="12" height="12" fill="#56f"/><rect x="276" y="276" width="24" height="12" fill="#66f"/><rect x="300" y="276" width="12" height="12" fill="#75f"/><rect x="312" y="276" width="12" height="12" fill="#85f"/><rect x="324" y="276" width="12" height="12" fill="#95f"/><rect x="336" y="276" width="12" height="12" fill="#a5f"/><rect x="348" y="276" width="12" height="12" fill="#a4f"/><rect x="360" y="276" width="12" height="12" fill="#b4f"/><rect x="372" y="276" width="12" height="12" fill="#c4f"/><rect x="384" y="276" width="24" height="12" fill="#d3f"/><rect x="408" y="276" width="12" height="12" fill="#e3f"/><rect x="420" y="276" width="12" height="12" fill="#f3f"/><rect x="432" y="276" width="24" height="12" fill="#f2e"/><rect x="456" y="276" width="24" height="12" fill="#f1d"/><rect x="480" y="276" width="12" height="12" fill="#f0c"/><rect x="492" y="276" width="36" height="12" fill="#907"/><rect x="528" y="276" width="60" height="12" fill="#906"/><rect x="588" y="276" width="84" height="12" fill="#905"/><rect x="672" y="276" width="108" height="12" fill="#904"/><rect x="72" y="288" width="84" height="12" fill="#059"/><rect x="156" y="288" width="72" height="12" fill="#049"/><rect x="228" y="288" width="12" height="12" fill="#16f"/><rect x="240" y="288" width="12" height="12" fill="#26f"/><rect x="252" y="288" width="12" height="12" fill="#36f"/><rect x="264" y="288" width="12" height="12" fill="#46f"/><rect x="276" y="288" width="12" height="12" fill="#55f"/><rect x="288" y="288" width="12" height="12" fill="#65f"/><rect x="300" y="288" width="12" height="12" fill="#75f"/><rect x="312" y="288" width="12" height="12" fill="#85f"/><rect x="324" y="288" width="12" height="12" fill="#84f"/><rect x="336" y="288" width="12" height="12" fill="#94f"/><rect x="348" y="288" width="12" height="12" fill="#a4f"/><rect x="360" y="288" width="12" height="12" fill="#b4f"/><rect x="372" y="288" width="12" height="12" fill="#b3f"/><rect x="384" y="288" width="12" height="12" fill="#c3f"/><rect x="396" y="288" width="12" height="12" fill="#d3f"/><rect x="408" y="288" width="24" height="12" fill="#e2f"/><rect x="432" y="288" width="12" height="12" fill="#f2f"/><rect x="444" y="288" width="24" height="12" fill="#f1e"/><rect x="468" y="288" width="12" height="12" fill="#f0d"/><rect x="480" y="288" width="12" height="12" fill="#908"/><rect x="492" y="288" width="48" height="12" fill="#907"/><rect x="540" y="288" width="72" height="12" fill="#906"/><rect x="612" y="288" width="84" height="12" fill="#905"/><rect x="696" y="288" width="72" height="12" fill="#904"/><rect x="72" y="300" width="48" height="12" fill="#059"/><rect x="120" y="300" width="108" height="12" fill="#049"/><rect x="228" y="300" width="12" height="12" fill="#16f"/><rect x="240" y="300" width="12" height="12" fill="#26f"/><rect x="252" y="300" width="12" height="12" fill="#35f"/><rect x="264" y="300" width="12" height="12" fill="#45f"/><rect x="276" y="300" width="12" height="12" fill="#55f"/><rect x="288" y="300" width="12" height="12" fill="#65f"/><rect x="300" y="300" width="12" height="12" fill="#64f"/><rect x="312" y="300" width="12" height="12" fill="#74f"/><rect x="324" y="300" width="12" height="12" fill="#84f"/><rect x="336" y="300" width="12" height="12" fill="#94f"/><rect x="348" y="300" width="12" height="12" fill="#93f"/><rect x="360" y="300" width="12" height="12" fill="#a3f"/><rect x="372" y="300" width="12" height="12" fill="#b3f"/><rect x="384" y="300" width="12" height="12" fill="#c3f"/><rect x="396" y="300" width="12" height="12" fill="#c2f"/><rect x="408" y="300" width="12" height="12" fill="#d2f"/><rect x="420" y="300" width="12" height="12" fill="#e2f"/><rect x="432" y="300" width="12" height="12" fill="#e1f"/><rect x="444" y="300" width="12" height="12" fill="#f1f"/><rect x="456" y="300" width="12" height="12" fill="#f0e"/><rect x="468" y="300" width="36" height="12" fill="#908"/><rect x="504" y="300" width="48" height="12" fill="#907"/><rect x="552" y="300" width="72" height="12" fill="#906"/><rect x="624" y="300" width="108" height="12" fill="#905"/><rect x="732" y="300" width="24" height="12" fill="#904"/><rect x="84" y="312" width="12" height="12" fill="#059"/><rect x="96" y="312" width="108" height="12" fill="#049"/><rect x="204" y="312" width="24" height="12" fill="#039"/><rect x="228" y="312" width="12" height="12" fill="#05f"/><rect x="240" y="312" width="12" height="12" fill="#25f"/><rect x="252" y="312" width="12" height="12" fill="#35f"/><rect x="264" y="312" width="12" height="12" fill="#45f"/><rect x="276" y="312" width="12" height="12" fill="#55f"/><rect x="288" y="312" width="12" height="12" fill="#54f"/><rect x="300" y="312" width="12" height="12" fill="#64f"/><rect x="312" y="312" width="12" height="12" fill="#74f"/><rect x="324" y="312" width="12" height="12" fill="#84f"/><rect x="336" y="312" width="12" height="12" fill="#83f"/><rect x="348" y="312" width="12" height="12" fill="#93f"/><rect x="360" y="312" width="24" height="12" fill="#a3f"/><rect x="384" y="312" width="12" height="12" fill="#b2f"/><rect x="396" y="312" width="24" height="12" fill="#c2f"/><rect x="420" y="312" width="12" height="12" fill="#d1f"/><rect x="432" y="312" width="12" height="12" fill="#e1f"/><rect x="444" y="312" width="12" height="12" fill="#e0f"/><rect x="456" y="312" width="24" height="12" fill="#909"/><rect x="480" y="312" width="36" height="12" fill="#908"/><rect x="516" y="312" width="60" height="12" fill="#907"/><rect x="576" y="312" width="72" height="12" fill="#906"/><rect x="648" y="312" width="96" height="12" fill="#905"/><rect x="84" y="324" width="96" height="12" fill="#049"/><rect x="180" y="324" width="48" height="12" fill="#039"/><rect x="228" y="324" width="12" height="12" fill="#05f"/><rect x="240" y="324" width="12" height="12" fill="#25f"/><rect x="252" y="324" width="12" height="12" fill="#35f"/><rect x="264" y="324" width="12" height="12" fill="#34f"/><rect x="276" y="324" width="12" height="12" fill="#44f"/><rect x="288" y="324" width="12" height="12" fill="#54f"/><rect x="300" y="324" width="12" height="12" fill="#64f"/><rect x="312" y="324" width="24" height="12" fill="#73f"/><rect x="336" y="324" width="12" height="12" fill="#83f"/><rect x="348" y="324" width="12" height="12" fill="#93f"/><rect x="360" y="324" width="12" height="12" fill="#92f"/><rect x="372" y="324" width="12" height="12" fill="#a2f"/><rect x="384" y="324" width="24" height="12" fill="#b2f"/><rect x="408" y="324" width="24" height="12" fill="#c1f"/><rect x="432" y="324" width="12" height="12" fill="#d0f"/><rect x="444" y="324" width="12" height="12" fill="#809"/><rect x="456" y="324" width="36" height="12" fill="#909"/><rect x="492" y="324" width="48" height="12" fill="#908"/><rect x="540" y="324" width="48" height="12" fill="#907"/><rect x="588" y="324" width="84" height="12" fill="#906"/><rect x="672" y="324" width="60" height="12" fill="#905"/><rect x="96" y="336" width="60" height="12" fill="#049"/><rect x="156" y="336" width="84" height="12" fill="#039"/><rect x="240" y="336" width="12" height="12" fill="#14f"/><rect x="252" y="336" width="12" height="12" fill="#24f"/><rect x="264" y="336" width="12" height="12" fill="#34f"/><rect x="276" y="336" width="12" height="12" fill="#44f"/><rect x="288" y="336" width="12" height="12" fill="#54f"/><rect x="300" y="336" width="24" height="12" fill="#63f"/><rect x="324" y="336" width="12" height="12" fill="#73f"/><rect x="336" y="336" width="12" height="12" fill="#83f"/><rect x="348" y="336" width="12" height="12" fill="#82f"/><rect x="360" y="336" width="12" height="12" fill="#92f"/><rect x="372" y="336" width="12" height="12" fill="#a2f"/><rect x="384" y="336" width="12" height="12" fill="#a1f"/><rect x="396" y="336" width="24" height="12" fill="#b1f"/><rect x="420" y="336" width="12" height="12" fill="#c0f"/><rect x="432" y="336" width="36" height="12" fill="#809"/><rect x="468" y="336" width="36" height="12" fill="#909"/><rect x="504" y="336" width="48" height="12" fill="#908"/><rect x="552" y="336" width="60" height="12" fill="#907"/><rect x="612" y="336" width="72" height="12" fill="#906"/><rect x="684" y="336" width="36" height="12" fill="#905"/><rect x="96" y="348" width="36" height="12" fill="#049"/><rect x="132" y="348" width="108" height="12" fill="#039"/><rect x="240" y="348" width="12" height="12" fill="#14f"/><rect x="252" y="348" width="12" height="12" fill="#24f"/><rect x="264" y="348" width="12" height="12" fill="#34f"/><rect x="276" y="348" width="12" height="12" fill="#43f"/><rect x="288" y="348" width="24" height="12" fill="#53f"/><rect x="312" y="348" width="12" height="12" fill="#63f"/><rect x="324" y="348" width="12" height="12" fill="#73f"/><rect x="336" y="348" width="12" height="12" fill="#72f"/><rect x="348" y="348" width="12" height="12" fill="#82f"/><rect x="360" y="348" width="12" height="12" fill="#92f"/><rect x="372" y="348" width="12" height="12" fill="#91f"/><rect x="384" y="348" width="24" height="12" fill="#a1f"/><rect x="408" y="348" width="12" height="12" fill="#b0f"/><rect x="420" y="348" width="24" height="12" fill="#709"/><rect x="444" y="348" width="36" height="12" fill="#809"/><rect x="480" y="348" width="36" height="12" fill="#909"/><rect x="516" y="348" width="48" height="12" fill="#908"/><rect x="564" y="348" width="60" height="12" fill="#907"/><rect x="624" y="348" width="84" height="12" fill="#906"/><rect x="108" y="360" width="108" height="12" fill="#039"/><rect x="216" y="360" width="24" height="12" fill="#029"/><rect x="240" y="360" width="12" height="12" fill="#14f"/><rect x="252" y="360" width="12" height="12" fill="#24f"/><rect x="264" y="360" width="12" height="12" fill="#33f"/><rect x="276" y="360" width="24" height="12" fill="#43f"/><rect x="300" y="360" width="12" height="12" fill="#53f"/><rect x="312" y="360" width="24" height="12" fill="#62f"/><rect x="336" y="360" width="12" height="12" fill="#72f"/><rect x="348" y="360" width="12" height="12" fill="#82f"/><rect x="360" y="360" width="12" height="12" fill="#81f"/><rect x="372" y="360" width="24" height="12" fill="#91f"/><rect x="396" y="360" width="12" height="12" fill="#a0f"/><rect x="408" y="360" width="12" height="12" fill="#609"/><rect x="420" y="360" width="36" height="12" fill="#709"/><rect x="456" y="360" width="36" height="12" fill="#809"/><rect x="492" y="360" width="36" height="12" fill="#909"/><rect x="528" y="360" width="48" height="12" fill="#908"/><rect x="576" y="360" width="60" height="12" fill="#907"/><rect x="636" y="360" width="60" height="12" fill="#906"/><rect x="120" y="372" width="84" height="12" fill="#039"/><rect x="204" y="372" width="36" height="12" fill="#029"/><rect x="240" y="372" width="12" height="12" fill="#13f"/><rect x="252" y="372" width="12" height="12" fill="#23f"/><rect x="264" y="372" width="24" height="12" fill="#33f"/><rect x="288" y="372" width="12" height="12" fill="#43f"/><rect x="300" y="372" width="24" height="12" fill="#52f"/><rect x="324" y="372" width="12" height="12" fill="#62f"/><rect x="336" y="372" width="12" height="12" fill="#72f"/><rect x="348" y="372" width="12" height="12" fill="#71f"/><rect x="360" y="372" width="24" height="12" fill="#81f"/><rect x="384" y="372" width="12" height="12" fill="#90f"/><rect x="396" y="372" width="36" height="12" fill="#609"/><rect x="432" y="372" width="36" height="12" fill="#709"/><rect x="468" y="372" width="36" height="12" fill="#809"/><rect x="504" y="372" width="36" height="12" fill="#909"/><rect x="540" y="372" width="48" height="12" fill="#908"/><rect x="588" y="372" width="72" height="12" fill="#907"/><rect x="660" y="372" width="24" height="12" fill="#906"/><rect x="120" y="384" width="60" height="12" fill="#039"/><rect x="180" y="384" width="60" height="12" fill="#029"/><rect x="240" y="384" width="12" height="12" fill="#03f"/><rect x="252" y="384" width="12" height="12" fill="#13f"/><rect x="264" y="384" width="12" height="12" fill="#23f"/><rect x="276" y="384" width="12" height="12" fill="#33f"/><rect x="288" y="384" width="24" height="12" fill="#42f"/><rect x="312" y="384" width="12" height="12" fill="#52f"/><rect x="324" y="384" width="12" height="12" fill="#62f"/><rect x="336" y="384" width="12" height="12" fill="#61f"/><rect x="348" y="384" width="12" height="12" fill="#71f"/><rect x="360" y="384" width="12" height="12" fill="#81f"/><rect x="372" y="384" width="12" height="12" fill="#80f"/><rect x="384" y="384" width="12" height="12" fill="#509"/><rect x="396" y="384" width="48" height="12" fill="#609"/><rect x="444" y="384" width="36" height="12" fill="#709"/><rect x="480" y="384" width="36" height="12" fill="#809"/><rect x="516" y="384" width="36" height="12" fill="#909"/><rect x="552" y="384" width="60" height="12" fill="#908"/><rect x="612" y="384" width="60" height="12" fill="#907"/><rect x="132" y="396" width="24" height="12" fill="#039"/><rect x="156" y="396" width="84" height="12" fill="#029"/><rect x="240" y="396" width="12" height="12" fill="#03f"/><rect x="252" y="396" width="12" height="12" fill="#13f"/><rect x="264" y="396" width="12" height="12" fill="#22f"/><rect x="276" y="396" width="12" height="12" fill="#32f"/><rect x="288" y="396" width="24" height="12" fill="#42f"/><rect x="312" y="396" width="12" height="12" fill="#52f"/><rect x="324" y="396" width="24" height="12" fill="#61f"/><rect x="348" y="396" width="12" height="12" fill="#71f"/><rect x="360" y="396" width="12" height="12" fill="#70f"/><rect x="372" y="396" width="36" height="12" fill="#509"/><rect x="408" y="396" width="36" height="12" fill="#609"/><rect x="444" y="396" width="48" height="12" fill="#709"/><rect x="492" y="396" width="36" height="12" fill="#809"/><rect x="528" y="396" width="36" height="12" fill="#909"/><rect x="564" y="396" width="60" height="12" fill="#908"/><rect x="624" y="396" width="36" height="12" fill="#907"/><rect x="132" y="408" width="12" height="12" fill="#039"/><rect x="144" y="408" width="108" height="12" fill="#029"/><rect x="252" y="408" width="12" height="12" fill="#12f"/><rect x="264" y="408" width="12" height="12" fill="#22f"/><rect x="276" y="408" width="24" height="12" fill="#32f"/><rect x="300" y="408" width="12" height="12" fill="#42f"/><rect x="312" y="408" width="24" height="12" fill="#51f"/><rect x="336" y="408" width="12" height="12" fill="#61f"/><rect x="348" y="408" width="12" height="12" fill="#60f"/><rect x="360" y="408" width="12" height="12" fill="#409"/><rect x="372" y="408" width="48" height="12" fill="#509"/><rect x="420" y="408" width="36" height="12" fill="#609"/><rect x="456" y="408" width="36" height="12" fill="#709"/><rect x="492" y="408" width="48" height="12" fill="#809"/><rect x="540" y="408" width="48" height="12" fill="#909"/><rect x="588" y="408" width="48" height="12" fill="#908"/><rect x="636" y="408" width="12" height="12" fill="#907"/><rect x="144" y="420" width="96" height="12" fill="#029"/><rect x="240" y="420" width="12" height="12" fill="#019"/><rect x="252" y="420" width="12" height="12" fill="#12f"/><rect x="264" y="420" width="12" height="12" fill="#22f"/><rect x="276" y="420" width="12" height="12" fill="#32f"/><rect x="288" y="420" width="12" height="12" fill="#31f"/><rect x="300" y="420" width="24" height="12" fill="#41f"/><rect x="324" y="420" width="12" height="12" fill="#51f"/><rect x="336" y="420" width="12" height="12" fill="#60f"/><rect x="348" y="420" width="36" height="12" fill="#409"/><rect x="384" y="420" width="36" height="12" fill="#509"/><rect x="420" y="420" width="48" height="12" fill="#609"/><rect x="468" y="420" width="36" height="12" fill="#709"/><rect x="504" y="420" width="48" height="12" fill="#809"/><rect x="552" y="420" width="48" height="12" fill="#909"/><rect x="600" y="420" width="36" height="12" fill="#908"/><rect x="156" y="432" width="60" height="12" fill="#029"/><rect x="216" y="432" width="36" height="12" fill="#019"/><rect x="252" y="432" width="12" height="12" fill="#12f"/><rect x="264" y="432" width="12" height="12" fill="#22f"/><rect x="276" y="432" width="12" height="12" fill="#21f"/><rect x="288" y="432" width="12" height="12" fill="#31f"/><rect x="300" y="432" width="24" height="12" fill="#41f"/><rect x="324" y="432" width="12" height="12" fill="#50f"/><rect x="336" y="432" width="12" height="12" fill="#309"/><rect x="348" y="432" width="36" height="12" fill="#409"/><rect x="384" y="432" width="48" height="12" fill="#509"/><rect x="432" y="432" width="36" height="12" fill="#609"/><rect x="468" y="432" width="48" height="12" fill="#709"/><rect x="516" y="432" width="48" height="12" fill="#809"/><rect x="564" y="432" width="48" height="12" fill="#909"/><rect x="612" y="432" width="12" height="12" fill="#908"/><rect x="156" y="444" width="48" height="12" fill="#029"/><rect x="204" y="444" width="48" height="12" fill="#019"/><rect x="252" y="444" width="12" height="12" fill="#12f"/><rect x="264" y="444" width="12" height="12" fill="#11f"/><rect x="276" y="444" width="12" height="12" fill="#21f"/><rect x="288" y="444" width="24" height="12" fill="#31f"/><rect x="312" y="444" width="12" height="12" fill="#40f"/><rect x="324" y="444" width="36" height="12" fill="#309"/><rect x="360" y="444" width="36" height="12" fill="#409"/><rect x="396" y="444" width="48" height="12" fill="#509"/><rect x="444" y="444" width="36" height="12" fill="#609"/><rect x="480" y="444" width="48" height="12" fill="#709"/><rect x="528" y="444" width="48" height="12" fill="#809"/><rect x="576" y="444" width="36" height="12" fill="#909"/><rect x="168" y="456" width="24" height="12" fill="#029"/><rect x="192" y="456" width="60" height="12" fill="#019"/><rect x="252" y="456" width="12" height="12" fill="#01f"/><rect x="264" y="456" width="12" height="12" fill="#11f"/><rect x="276" y="456" width="12" height="12" fill="#21f"/><rect x="288" y="456" width="12" height="12" fill="#31f"/><rect x="300" y="456" width="12" height="12" fill="#30f"/><rect x="312" y="456" width="12" height="12" fill="#209"/><rect x="324" y="456" width="36" height="12" fill="#309"/><rect x="360" y="456" width="48" height="12" fill="#409"/><rect x="408" y="456" width="36" height="12" fill="#509"/><rect x="444" y="456" width="48" height="12" fill="#609"/><rect x="492" y="456" width="48" height="12" fill="#709"/><rect x="540" y="456" width="48" height="12" fill="#809"/><rect x="588" y="456" width="12" height="12" fill="#909"/><rect x="180" y="468" width="72" height="12" fill="#019"/><rect x="252" y="468" width="12" height="12" fill="#01f"/><rect x="264" y="468" width="12" height="12" fill="#11f"/><rect x="276" y="468" width="12" height="12" fill="#21f"/><rect x="288" y="468" width="12" height="12" fill="#30f"/><rect x="300" y="468" width="24" height="12" fill="#209"/><rect x="324" y="468" width="48" height="12" fill="#309"/><rect x="372" y="468" width="36" height="12" fill="#409"/><rect x="408" y="468" width="48" height="12" fill="#509"/><rect x="456" y="468" width="48" height="12" fill="#609"/><rect x="504" y="468" width="48" height="12" fill="#709"/><rect x="552" y="468" width="36" height="12" fill="#809"/><rect x="180" y="480" width="84" height="12" fill="#019"/><rect x="264" y="480" width="12" height="12" fill="#11f"/><rect x="276" y="480" width="12" height="12" fill="#20f"/><rect x="288" y="480" width="12" height="12" fill="#109"/><rect x="300" y="480" width="36" height="12" fill="#209"/><rect x="336" y="480" width="36" height="12" fill="#309"/><rect x="372" y="480" width="48" height="12" fill="#409"/><rect x="420" y="480" width="36" height="12" fill="#509"/><rect x="456" y="480" width="48" height="12" fill="#609"/><rect x="504" y="480" width="48" height="12" fill="#709"/><rect x="552" y="480" width="24" height="12" fill="#809"/><rect x="192" y="492" width="60" height="12" fill="#019"/><rect x="252" y="492" width="12" height="12" fill="#009"/><rect x="264" y="492" width="12" height="12" fill="#10f"/><rect x="276" y="492" width="24" height="12" fill="#109"/><rect x="300" y="492" width="36" height="12" fill="#209"/><rect x="336" y="492" width="36" height="12" fill="#309"/><rect x="372" y="492" width="48" height="12" fill="#409"/><rect x="420" y="492" width="48" height="12" fill="#509"/><rect x="468" y="492" width="48" height="12" fill="#609"/><rect x="516" y="492" width="48" height="12" fill="#709"/><rect x="204" y="504" width="36" height="12" fill="#019"/><rect x="240" y="504" width="36" height="12" fill="#009"/><rect x="276" y="504" width="24" height="12" fill="#109"/><rect x="300" y="504" width="36" height="12" fill="#209"/><rect x="336" y="504" width="48" height="12" fill="#309"/><rect x="384" y="504" width="48" height="12" fill="#409"/><rect x="432" y="504" width="48" height="12" fill="#509"/><rect x="480" y="504" width="48" height="12" fill="#609"/><rect x="528" y="504" width="24" height="12" fill="#709"/><rect x="204" y="516" width="12" height="12" fill="#019"/><rect x="216" y="516" width="60" height="12" fill="#009"/><rect x="276" y="516" width="24" height="12" fill="#109"/><rect x="300" y="516" width="48" height="12" fill="#209"/><rect x="348" y="516" width="36" height="12" fill="#309"/><rect x="384" y="516" width="48" height="12" fill="#409"/><rect x="432" y="516" width="48" height="12" fill="#509"/><rect x="480" y="516" width="60" height="12" fill="#609"/><rect x="216" y="528" width="60" height="12" fill="#009"/><rect x="276" y="528" width="36" height="12" fill="#109"/><rect x="312" y="528" width="36" height="12" fill="#209"/><rect x="348" y="528" width="48" height="12" fill="#309"/><rect x="396" y="528" width="48" height="12" fill="#409"/><rect x="444" y="528" width="48" height="12" fill="#509"/><rect x="492" y="528" width="36" height="12" fill="#609"/><rect x="228" y="540" width="48" height="12" fill="#009"/><rect x="276" y="540" width="36" height="12" fill="#109"/><rect x="312" y="540" width="36" height="12" fill="#209"/><rect x="348" y="540" width="48" height="12" fill="#309"/><rect x="396" y="540" width="48" height="12" fill="#409"/><rect x="444" y="540" width="48" height="12" fill="#509"/><rect x="492" y="540" width="24" height="12" fill="#609"/><rect x="240" y="552" width="36" height="12" fill="#009"/><rect x="276" y="552" width="36" height="12" fill="#109"/><rect x="312" y="552" width="48" height="12" fill="#209"/><rect x="360" y="552" width="36" height="12" fill="#309"/><rect x="396" y="552" width="60" height="12" fill="#409"/><rect x="456" y="552" width="48" height="12" fill="#509"/><rect x="504" y="552" width="12" height="12" fill="#609"/><rect x="252" y="564" width="36" height="12" fill="#009"/><rect x="288" y="564" width="24" height="12" fill="#109"/><rect x="312" y="564" width="48" height="12" fill="#209"/><rect x="360" y="564" width="48" height="12" fill="#309"/><rect x="408" y="564" width="48" height="12" fill="#409"/><rect x="456" y="564" width="48" height="12" fill="#509"/><rect x="264" y="576" width="24" height="12" fill="#009"/><rect x="288" y="576" width="36" height="12" fill="#109"/><rect x="324" y="576" width="36" height="12" fill="#209"/><rect x="360" y="576" width="48" height="12" fill="#309"/><rect x="408" y="576" width="60" height="12" fill="#409"/><rect x="468" y="576" width="24" height="12" fill="#509"/><rect x="276" y="588" width="12" height="12" fill="#009"/><rect x="288" y="588" width="36" height="12" fill="#109"/><rect x="324" y="588" width="48" height="12" fill="#209"/><rect x="372" y="588" width="48" height="12" fill="#309"/><rect x="420" y="588" width="48" height="12" fill="#409"/><rect x="468" y="588" width="12" height="12" fill="#509"/><rect x="288" y="600" width="36" height="12" fill="#109"/><rect x="324" y="600" width="48" height="12" fill="#209"/><rect x="372" y="600" width="48" height="12" fill="#309"/><rect x="420" y="600" width="48" height="12" fill="#409"/><rect x="300" y="612" width="24" height="12" fill="#109"/><rect x="324" y="612" width="48" height="12" fill="#209"/><rect x="372" y="612" width="60" height="12" fill="#309"/><rect x="432" y="612" width="24" height="12" fill="#409"/><rect x="312" y="624" width="24" height="12" fill="#109"/><rect x="336" y="624" width="48" height="12" fill="#209"/><rect x="384" y="624" width="48" height="12" fill="#309"/><rect x="432" y="624" width="12" height="12" fill="#409"/><rect x="324" y="636" width="12" height="12" fill="#109"/><rect x="336" y="636" width="48" height="12" fill="#209"/><rect x="384" y="636" width="48" height="12" fill="#309"/><rect x="336" y="648" width="48" height="12" fill="#209"/><rect x="384" y="648" width="36" height="12" fill="#309"/><rect x="360" y="660" width="36" height="12" fill="#209"/><rect x="396" y="660" width="12" height="12" fill="#309"/><rect x="372" y="672" width="24" height="12" fill="#209"/></g></svg>
<canvas id="cie" width="903" height="694" style="position:absolute;left:1641px;top:275px;width:903px;height:694px"></canvas>
<div style="position:absolute;left:1639px;top:273px;width:907px;height:2px;background:#a0a0a0"></div>
<div style="position:absolute;left:1639px;top:969px;width:907px;height:2px;background:#a0a0a0"></div>
<div style="position:absolute;left:1639px;top:273px;width:2px;height:698px;background:#a0a0a0"></div>
<div style="position:absolute;left:2544px;top:273px;width:2px;height:698px;background:#a0a0a0"></div>
<svg style="position:absolute;left:1641px;top:275px" width="903" height="694" viewBox="1641 275 903 694"><rect x="1818.5" y="307.4" width="18" height="18" fill="none" stroke="#fff" stroke-width="2.6"/><rect x="1835.4" y="324.4" width="18" height="18" fill="none" stroke="#fff" stroke-width="2.6"/><rect x="1852.7" y="341.4" width="18" height="18" fill="none" stroke="#fff" stroke-width="2.6"/><rect x="1874.0" y="363.0" width="18" height="18" fill="none" stroke="#fff" stroke-width="2.6"/><rect x="1899.0" y="386.4" width="18" height="18" fill="none" stroke="#fff" stroke-width="2.6"/><rect x="1937.7" y="318.0" width="18" height="18" fill="none" stroke="#fff" stroke-width="2.6"/><rect x="1935.7" y="335.0" width="18" height="18" fill="none" stroke="#fff" stroke-width="2.6"/><rect x="1936.0" y="353.0" width="18" height="18" fill="none" stroke="#fff" stroke-width="2.6"/><rect x="1934.0" y="370.7" width="18" height="18" fill="none" stroke="#fff" stroke-width="2.6"/><rect x="1932.0" y="391.7" width="18" height="18" fill="none" stroke="#fff" stroke-width="2.6"/><rect x="1839.5" y="432.6" width="18" height="18" fill="none" stroke="#fff" stroke-width="2.6"/><rect x="1856.4" y="428.5" width="18" height="18" fill="none" stroke="#fff" stroke-width="2.6"/><rect x="1875.6" y="426.5" width="18" height="18" fill="none" stroke="#fff" stroke-width="2.6"/><rect x="1894.0" y="422.5" width="18" height="18" fill="none" stroke="#fff" stroke-width="2.6"/><rect x="1912.5" y="420.2" width="18" height="18" fill="none" stroke="#fff" stroke-width="2.6"/><rect x="2309.0" y="353.6" width="18" height="18" fill="none" stroke="#fff" stroke-width="2.6"/><rect x="2218.5" y="368.5" width="18" height="18" fill="none" stroke="#fff" stroke-width="2.6"/><rect x="2141.7" y="382.5" width="18" height="18" fill="none" stroke="#fff" stroke-width="2.6"/><rect x="2072.8" y="391.9" width="18" height="18" fill="none" stroke="#fff" stroke-width="2.6"/><rect x="1997.6" y="405.5" width="18" height="18" fill="none" stroke="#fff" stroke-width="2.6"/><rect x="2089.6" y="576.3" width="18" height="18" fill="none" stroke="#fff" stroke-width="2.6"/><rect x="2043.5" y="532.4" width="18" height="18" fill="none" stroke="#fff" stroke-width="2.6"/><rect x="2006.7" y="495.8" width="18" height="18" fill="none" stroke="#fff" stroke-width="2.6"/><rect x="1979.7" y="467.1" width="18" height="18" fill="none" stroke="#fff" stroke-width="2.6"/><rect x="1952.7" y="440.0" width="18" height="18" fill="none" stroke="#fff" stroke-width="2.6"/><rect x="1895.3" y="776.8" width="18" height="18" fill="none" stroke="#fff" stroke-width="2.6"/><rect x="1906.7" y="655.3" width="18" height="18" fill="none" stroke="#fff" stroke-width="2.6"/><rect x="1914.6" y="574.4" width="18" height="18" fill="none" stroke="#fff" stroke-width="2.6"/><rect x="1920.7" y="511.3" width="18" height="18" fill="none" stroke="#fff" stroke-width="2.6"/><rect x="1924.0" y="459.5" width="18" height="18" fill="none" stroke="#fff" stroke-width="2.6"/><rect x="1927.6" y="416.9" width="18" height="18" fill="none" stroke="#000" stroke-width="2.6"/><circle cx="1828.9" cy="316.4" r="5.6" fill="#00b000" stroke="#111" stroke-width="1.8"/><circle cx="1846.5" cy="333.5" r="5.6" fill="#50b050" stroke="#111" stroke-width="1.8"/><circle cx="1865.4" cy="350.9" r="5.6" fill="#6ab06a" stroke="#111" stroke-width="1.8"/><circle cx="1885.0" cy="370.0" r="5.6" fill="#88b888" stroke="#111" stroke-width="1.8"/><circle cx="1909.9" cy="395.0" r="5.6" fill="#a0c0a0" stroke="#111" stroke-width="1.8"/><circle cx="1950.3" cy="328.2" r="5.6" fill="#c8c000" stroke="#111" stroke-width="1.8"/><circle cx="1950.3" cy="344.9" r="5.6" fill="#c0c050" stroke="#111" stroke-width="1.8"/><circle cx="1948.4" cy="360.5" r="5.6" fill="#b8b870" stroke="#111" stroke-width="1.8"/><circle cx="1946.4" cy="378.0" r="5.6" fill="#c0c090" stroke="#111" stroke-width="1.8"/><circle cx="1942.2" cy="400.8" r="5.6" fill="#c8c4a8" stroke="#111" stroke-width="1.8"/><circle cx="1848.3" cy="439.3" r="5.6" fill="#10b8c0" stroke="#111" stroke-width="1.8"/><circle cx="1867.3" cy="437.3" r="5.6" fill="#58c0c0" stroke="#111" stroke-width="1.8"/><circle cx="1885.0" cy="433.2" r="5.6" fill="#78c0c0" stroke="#111" stroke-width="1.8"/><circle cx="1904.0" cy="431.2" r="5.6" fill="#98c0c0" stroke="#111" stroke-width="1.8"/><circle cx="1921.2" cy="427.9" r="5.6" fill="#a8b8b8" stroke="#111" stroke-width="1.8"/><circle cx="2320.0" cy="360.3" r="5.6" fill="#c00000" stroke="#111" stroke-width="1.8"/><circle cx="2231.4" cy="375.7" r="5.6" fill="#c84040" stroke="#111" stroke-width="1.8"/><circle cx="2156.4" cy="389.5" r="5.6" fill="#c05050" stroke="#111" stroke-width="1.8"/><circle cx="2087.0" cy="398.8" r="5.6" fill="#c07070" stroke="#111" stroke-width="1.8"/><circle cx="2012.0" cy="412.2" r="5.6" fill="#c09090" stroke="#111" stroke-width="1.8"/><circle cx="2104.6" cy="577.8" r="5.6" fill="#c000c0" stroke="#111" stroke-width="1.8"/><circle cx="2055.9" cy="534.0" r="5.6" fill="#c040c0" stroke="#111" stroke-width="1.8"/><circle cx="2021.4" cy="501.0" r="5.6" fill="#c060c0" stroke="#111" stroke-width="1.8"/><circle cx="1992.5" cy="474.2" r="5.6" fill="#c088c0" stroke="#111" stroke-width="1.8"/><circle cx="1965.0" cy="447.2" r="5.6" fill="#c0a0c0" stroke="#111" stroke-width="1.8"/><circle cx="1902.2" cy="787.5" r="5.6" fill="#0000b0" stroke="#111" stroke-width="1.8"/><circle cx="1915.7" cy="664.3" r="5.6" fill="#5050c0" stroke="#111" stroke-width="1.8"/><circle cx="1923.4" cy="582.2" r="5.6" fill="#7070b8" stroke="#111" stroke-width="1.8"/><circle cx="1931.0" cy="520.3" r="5.6" fill="#8888b8" stroke="#111" stroke-width="1.8"/><circle cx="1937.0" cy="468.4" r="5.6" fill="#a0a0c0" stroke="#111" stroke-width="1.8"/><circle cx="1940.6" cy="423.9" r="5.6" fill="#fff" stroke="#111" stroke-width="1.8"/></svg>
<div style="position:absolute;left:2232px;top:751px;width:308px;height:212px;background:#333"></div>
<svg style="position:absolute;left:2237px;top:756px" width="298" height="201"><defs><linearGradient id="ig1" x1="0" y1="0" x2="1" y2="1"><stop offset="0" stop-color="#d0ff10"/><stop offset="0.45" stop-color="#ffff10"/><stop offset="1" stop-color="#ffb000"/></linearGradient><linearGradient id="ig2" x1="0" y1="0" x2="1" y2="1"><stop offset="0" stop-color="#5a9000"/><stop offset="0.5" stop-color="#959000"/><stop offset="1" stop-color="#9a7000"/></linearGradient></defs><rect width="298" height="201" fill="url(#ig1)"/><polygon points="0,0 298,0 298,180 0,21" fill="url(#ig2)"/></svg>
<canvas id="ins" width="298" height="201" style="position:absolute;left:2237px;top:756px;width:298px;height:201px"></canvas>
<div style="position:absolute;left:2236px;top:755px;width:300px;height:204px;border:2px solid #a0a0a0"></div>
<svg style="position:absolute;left:2360px;top:840px" width="60" height="45"><rect x="15.7" y="6.6" width="18" height="18" fill="none" stroke="#fff" stroke-width="3"/><circle cx="42" cy="31.4" r="6.2" fill="#c8c000" stroke="#111" stroke-width="2"/></svg>

<script>
(function(){
function rgbFromXY(x,y){
  var X=x/y, Y=1, Z=(1-x-y)/y;
  var r= 3.2406*X-1.5372*Y-0.4986*Z, g=-0.9689*X+1.8758*Y+0.0415*Z, b=0.0557*X-0.2040*Y+1.0570*Z;
  var f=1;
  if(r<0||g<0||b<0){ f=DARK; if(r<0)r=0; if(g<0)g=0; if(b<0)b=0; }
  var m=Math.max(r,g,b); r/=m; g/=m; b/=m;
  return [255*f*Math.pow(r,GAM),255*f*Math.pow(g,GAM),255*f*Math.pow(b,GAM)];
}
var DARK=0.6, GAM=0.75;
var cv=document.getElementById('cie'); if(!cv||!cv.getContext) return;
var W=cv.width,H=cv.height, ctx=cv.getContext('2d');
var off=document.createElement('canvas'); off.width=W; off.height=H;
var oc=off.getContext('2d'); var id=oc.createImageData(W,H); var d=id.data;
for(var j=0;j<H;j++){ var v=(970-(275+j+0.5))/1156;
  for(var i=0;i<W;i++){ var u=(1641+i+0.5-1640)/1507;
    var den=6*u-16*v+12; var x=9*u/den, y=4*v/den; if(y<=0.0005) y=0.0005;
    var c=rgbFromXY(x,y); var p=(j*W+i)*4; d[p]=c[0]; d[p+1]=c[1]; d[p+2]=c[2]; d[p+3]=255; }}
oc.putImageData(id,0,0);
ctx.save(); ctx.beginPath(); var P=new Path2D("M384.3,674.1 C384.2,674.1 384.0,674.2 383.8,674.3 C383.5,674.3 383.3,674.4 382.9,674.4 C382.6,674.5 382.4,674.8 381.9,674.6 C381.3,674.5 381.6,674.9 379.8,673.7 C378.0,672.5 373.7,669.5 371.0,667.4 C368.3,665.4 366.3,663.8 363.5,661.4 C360.7,659.1 357.7,656.4 354.1,653.5 C350.5,650.5 346.8,647.4 342.1,643.6 C337.5,639.8 332.2,635.5 326.4,630.8 C320.6,626.0 314.5,621.1 307.4,615.0 C300.3,608.8 292.6,602.2 284.0,593.9 C275.5,585.7 266.9,577.7 255.9,565.4 C245.0,553.2 232.3,538.2 218.6,520.5 C205.0,502.7 189.5,481.8 174.1,458.7 C158.6,435.7 141.6,408.6 125.7,381.9 C109.9,355.3 93.1,326.0 79.2,298.9 C65.4,271.7 53.0,243.6 42.8,219.1 C32.6,194.6 24.3,171.4 18.0,151.9 C11.7,132.3 7.8,116.0 5.1,101.9 C2.3,87.8 1.5,76.9 1.7,67.1 C1.9,57.3 3.6,49.7 6.3,43.2 C8.9,36.7 12.9,31.8 17.5,28.0 C22.1,24.2 27.9,22.0 33.8,20.3 C39.8,18.5 46.5,18.0 53.3,17.4 C60.0,16.8 67.3,16.8 74.4,16.7 C81.6,16.6 88.6,16.8 96.0,17.0 C103.3,17.2 110.6,17.6 118.4,18.0 C126.2,18.5 134.2,19.1 142.6,19.8 C151.0,20.4 159.7,21.2 168.8,22.1 C178.0,23.0 187.6,24.0 197.7,25.0 C207.9,26.1 218.5,27.2 229.7,28.5 C241.0,29.7 252.7,31.0 265.1,32.4 C277.5,33.8 290.6,35.3 304.3,36.8 C318.0,38.4 332.4,40.0 347.4,41.7 C362.4,43.5 378.1,45.3 394.4,47.1 C410.6,49.0 427.6,51.0 445.0,52.9 C462.4,54.9 480.5,57.0 498.6,59.1 C516.7,61.1 535.6,63.3 553.7,65.4 C571.7,67.5 589.5,69.5 607.0,71.5 C624.6,73.5 642.5,75.6 659.0,77.5 C675.5,79.4 691.3,81.1 706.0,82.8 C720.8,84.5 734.8,86.1 747.6,87.6 C760.5,89.1 772.2,90.4 783.0,91.7 C793.9,92.9 803.6,94.0 812.7,95.1 C821.8,96.1 829.9,97.0 837.7,97.9 C845.4,98.8 852.7,99.7 859.3,100.4 C866.0,101.2 872.1,101.9 877.6,102.5 C883.2,103.2 888.1,103.7 892.4,104.2 C896.8,104.7 899.4,105.0 903.9,105.5 C908.5,106.0 914.7,106.8 919.6,107.3 C924.5,107.9 930.0,108.5 933.2,108.9 C936.3,109.3 937.6,109.4 938.5,109.5 Z"); ctx.clip(P); ctx.drawImage(off,0,0); ctx.restore();
var cv2=document.getElementById('ins'); var c2=cv2.getContext('2d'); var W2=cv2.width,H2=cv2.height;
var id2=c2.createImageData(W2,H2), d2=id2.data;
for(var j=0;j<H2;j++){ for(var i=0;i<W2;i++){
   var x=0.4193+((2237+i+0.5)-2384.7)/3800, y=0.5053-((756+j+0.5)-855.5)/2537;
   var c=rgbFromXY(x,y); var p=(j*W2+i)*4; d2[p]=c[0]; d2[p+1]=c[1]; d2[p+2]=c[2]; d2[p+3]=255; }}
c2.putImageData(id2,0,0);
})();
</script>
<div style="position:absolute;left:201px;top:1490px;width:2359px;height:62px;background:linear-gradient(#474747,#3b3b3b 30%,#2e2e2e 70%,#232323)"></div>
<div style="position:absolute;left:201px;top:1490px;width:45px;height:61px;border-radius:5px;background:linear-gradient(#a8a8a8,#8a8a8a 40%,#5c5c5c)"></div>
<div style="position:absolute;left:216px;top:1492px;width:15px;height:15px;border-radius:50%;background:linear-gradient(#6a6a6a,#9a9a9a)"></div>
<svg style="position:absolute;left:219px;top:1496px" width="9" height="5"><polygon points="4.5,0 9,5 0,5" fill="#222"/></svg>
<div style="position:absolute;left:206px;top:1516px;width:35px;height:30px;border-radius:4px;background:#ffff00;box-shadow:inset 1px 1px 1px #aaa000"></div>
<div style="position:absolute;left:252px;top:1490px;width:150px;height:61px;border-radius:5px;background:linear-gradient(#a6a6a6,#8c8c8c 40%,#5e5e5e)"></div>
<div style="position:absolute;left:258px;top:1495px;width:139px;height:36px;border-radius:4px;background:#c4c1a2;box-shadow:inset 1px 1px 1px #0000004d"></div>
<div style="position:absolute;left:314.72px;top:1536.18px;font-size:12.14px;line-height:1;font-weight:normal;color:#2a2a2a;white-space:nowrap;">20%</div>
<div style="position:absolute;left:404px;top:1490px;width:150px;height:61px;border-radius:5px;background:linear-gradient(#a6a6a6,#8c8c8c 40%,#5e5e5e)"></div>
<div style="position:absolute;left:410px;top:1495px;width:139px;height:36px;border-radius:4px;background:#c3c086;box-shadow:inset 1px 1px 1px #0000004d"></div>
<div style="position:absolute;left:466.90px;top:1536.18px;font-size:12.14px;line-height:1;font-weight:normal;color:#2a2a2a;white-space:nowrap;">40%</div>
<div style="position:absolute;left:556px;top:1490px;width:150px;height:61px;border-radius:5px;background:linear-gradient(#a6a6a6,#8c8c8c 40%,#5e5e5e)"></div>
<div style="position:absolute;left:562px;top:1495px;width:139px;height:36px;border-radius:4px;background:#c2bf6b;box-shadow:inset 1px 1px 1px #0000004d"></div>
<div style="position:absolute;left:618.72px;top:1536.18px;font-size:12.14px;line-height:1;font-weight:normal;color:#2a2a2a;white-space:nowrap;">60%</div>
<div style="position:absolute;left:708px;top:1490px;width:150px;height:61px;border-radius:5px;background:linear-gradient(#a6a6a6,#8c8c8c 40%,#5e5e5e)"></div>
<div style="position:absolute;left:714px;top:1495px;width:139px;height:36px;border-radius:4px;background:#c3bd4c;box-shadow:inset 1px 1px 1px #0000004d"></div>
<div style="position:absolute;left:770.78px;top:1536.18px;font-size:12.14px;line-height:1;font-weight:normal;color:#2a2a2a;white-space:nowrap;">80%</div>
<div style="position:absolute;left:860px;top:1490px;width:150px;height:61px;border-radius:5px;background:linear-gradient(#1a1a1a,#222 40%,#363636)"></div>
<div style="position:absolute;left:866px;top:1495px;width:139px;height:36px;border-radius:4px;background:#c3c000"></div>
<div style="position:absolute;left:918.30px;top:1535.57px;font-size:12.86px;line-height:1;font-weight:bold;color:#fff;white-space:nowrap;">100%</div>
<div style="position:absolute;left:2237px;top:1509px;width:49px;height:43px;border-radius:5px 0 0 0;background:linear-gradient(#8a8a8a,#5a5a5a)"></div>
<div style="position:absolute;left:2246px;top:1515px;width:31px;height:30px;border-radius:4px;border:3px solid #222;background:linear-gradient(#c0c0c0,#9a9a9a)"></div>
<div style="position:absolute;left:2254px;top:1523px;width:14px;height:14px;background:#000"></div>
<div style="position:absolute;left:2287px;top:1491px;width:273px;height:30px;background:linear-gradient(#8c8c8c,#6a6a6a);border-radius:4px 0 0 0"></div>
<div style="position:absolute;left:2301.0px;top:1496px;width:20px;height:20px;border-radius:50%;background:linear-gradient(#6e6e6e,#9a9a9a)"></div>
<div style="position:absolute;left:2332px;top:1491px;width:1px;height:29px;background:#555"></div>
<div style="position:absolute;left:2346.5px;top:1496px;width:20px;height:20px;border-radius:50%;background:linear-gradient(#6e6e6e,#9a9a9a)"></div>
<div style="position:absolute;left:2378px;top:1491px;width:1px;height:29px;background:#555"></div>
<div style="position:absolute;left:2392.0px;top:1496px;width:20px;height:20px;border-radius:50%;background:linear-gradient(#6e6e6e,#9a9a9a)"></div>
<div style="position:absolute;left:2424px;top:1491px;width:1px;height:29px;background:#555"></div>
<div style="position:absolute;left:2437.5px;top:1496px;width:20px;height:20px;border-radius:50%;background:linear-gradient(#6e6e6e,#9a9a9a)"></div>
<div style="position:absolute;left:2469px;top:1491px;width:1px;height:29px;background:#555"></div>
<div style="position:absolute;left:2483.0px;top:1496px;width:20px;height:20px;border-radius:50%;background:linear-gradient(#6e6e6e,#9a9a9a)"></div>
<div style="position:absolute;left:2514px;top:1491px;width:1px;height:29px;background:#555"></div>
<div style="position:absolute;left:2528.5px;top:1496px;width:20px;height:20px;border-radius:50%;background:linear-gradient(#6e6e6e,#9a9a9a)"></div>
<div style="position:absolute;left:2287px;top:1521px;width:273px;height:31px;background:linear-gradient(#c4c4c4,#a8a8a8 50%,#8e8e8e);border-radius:4px 0 0 0"></div>
<div style="position:absolute;left:2422px;top:1521px;width:1px;height:31px;background:#777"></div>
<div style="position:absolute;left:2308px;top:1527px;width:20px;height:20px;border-radius:50%;background:linear-gradient(#8a8a8a,#b4b4b4)"></div>
<div style="position:absolute;left:2520px;top:1527px;width:20px;height:20px;border-radius:50%;background:linear-gradient(#8a8a8a,#b4b4b4)"></div>
<div style="position:absolute;left:2311.54px;top:1523.91px;font-size:21.28px;line-height:1;font-weight:normal;color:#333;white-space:nowrap;">«</div>
<div style="position:absolute;left:2524.04px;top:1523.91px;font-size:21.28px;line-height:1;font-weight:normal;color:#333;white-space:nowrap;">»</div>
<div style="position:absolute;left:2341.83px;top:1525.88px;font-size:20.96px;line-height:1;font-weight:normal;color:#2e2e2e;white-space:nowrap;transform:scaleX(1.1146);transform-origin:0 0;">Back</div>
<div style="position:absolute;left:2447.90px;top:1524.85px;font-size:22.17px;line-height:1;font-weight:normal;color:#2e2e2e;white-space:nowrap;transform:scaleX(1.1854);transform-origin:0 0;">Next</div>
<svg style="position:absolute;left:2165px;top:1460px;opacity:0.85" width="395" height="90" viewBox="0 0 395 90">
<g fill="none" stroke-linejoin="round">
<path d="M10,10 L70,26 L62,58 L97,66 L42,80 L13,58 Z" stroke="#ddd" stroke-width="9" opacity="0.55"/>
<path d="M10,10 L70,26 L62,58 L97,66 L42,80 L13,58 Z" stroke="#9a2a2a" stroke-width="5"/>
<path d="M24,30 L38,53 L66,8" stroke="#ddd" stroke-width="7" opacity="0.6"/>
<path d="M24,30 L38,53 L66,8" stroke="#2a2a2a" stroke-width="4"/>
</g>
<g font-family="Liberation Sans" font-weight="bold" font-size="38" stroke-linejoin="round" paint-order="stroke" stroke="#e6e6e6" stroke-width="3.6">
<text x="70" y="48" fill="#b04040" opacity="0.78" textLength="196" lengthAdjust="spacingAndGlyphs">NOTEBOOK</text>
<text x="266" y="48" fill="#303030" opacity="0.7" textLength="119" lengthAdjust="spacingAndGlyphs">CHECK</text>
</g></svg>
<div style="position:absolute;left:2553px;top:88px;width:7px;height:1402px;background:linear-gradient(90deg,rgba(20,20,20,0),rgba(20,20,20,0.9))"></div></body></html>
